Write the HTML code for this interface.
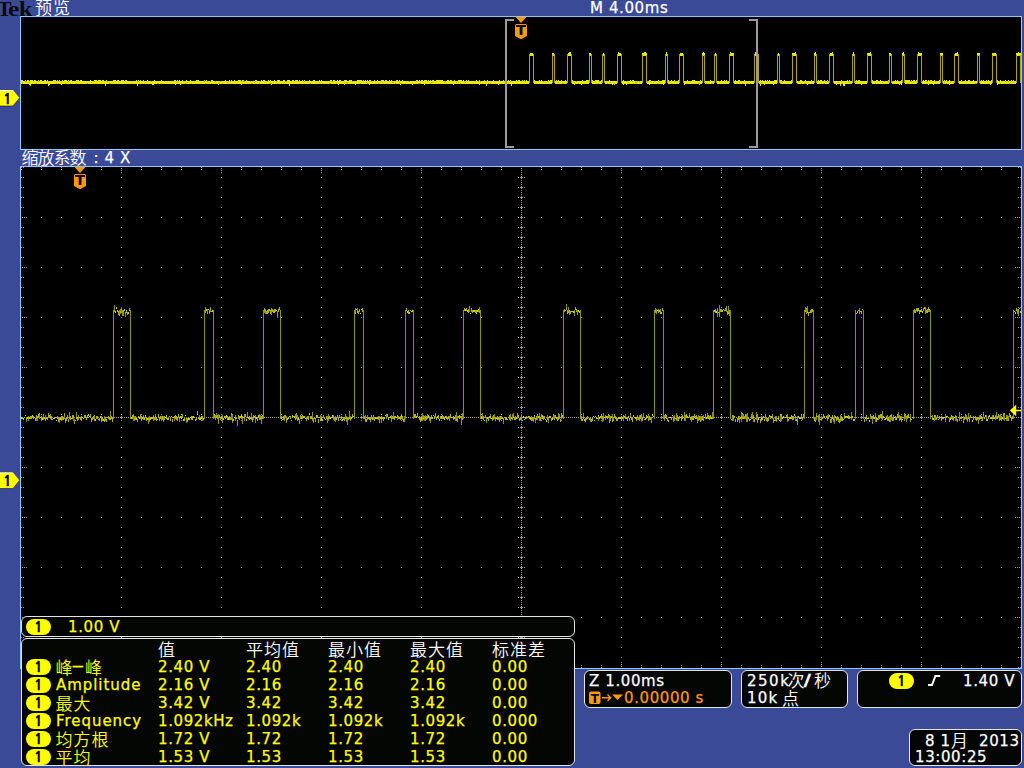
<!DOCTYPE html>
<html lang="zh"><head><meta charset="utf-8"><title>Tek</title><style>
html,body{margin:0;padding:0}
body{width:1024px;height:768px;overflow:hidden;background:#3b4a97;position:relative;font-family:"DejaVu Sans","Liberation Sans","Noto Sans CJK SC",sans-serif;font-size:15px;color:#fff;line-height:18px}
.scr{position:absolute;left:0;top:0}
.abs{position:absolute;white-space:pre;height:18px}
.t{-webkit-text-stroke:.25px currentColor;letter-spacing:.6px}
.cj{font-family:"Liberation Sans","Noto Sans CJK SC",sans-serif;font-weight:350;font-size:17px;letter-spacing:-1px;-webkit-text-stroke:0;position:absolute;white-space:pre;height:18px;line-height:18px}
.sp{letter-spacing:1px}
.tek span{position:absolute;top:0;transform-origin:0 0}
.tek{left:0;width:40px;top:-3px;font-family:"Liberation Serif",serif;font-weight:bold;font-size:21px;color:#0a0a0a;letter-spacing:-.4px;line-height:24px;height:24px}
.box{position:absolute;background:#040604;border:1px solid #e4e4e4;border-radius:6px;box-sizing:border-box}
.pill{position:absolute;width:25px;height:16px;border-radius:8px;background:#ffff00;color:#000;text-align:center;line-height:16px;font-size:14.5px;font-family:'NanumGothic','Liberation Sans',sans-serif;font-weight:bold;-webkit-text-stroke:.4px #000}
.y{color:#ffff00}
.o{color:#ff9900}
</style></head>
<body>
<svg class="scr" width="1024" height="768" viewBox="0 0 1024 768">
<rect x="20.5" y="16.5" width="1001" height="133" fill="#000" stroke="#93c4fb"/>
<rect x="20.5" y="166.5" width="1001" height="502" fill="#000" stroke="#93c4fb"/>
<g stroke="#a39a7d" stroke-width="1" shape-rendering="crispEdges" fill="none"><line x1="121.5" x2="121.5" y1="177" y2="658" stroke-dasharray="1 9"/><line x1="221.5" x2="221.5" y1="177" y2="658" stroke-dasharray="1 9"/><line x1="321.5" x2="321.5" y1="177" y2="658" stroke-dasharray="1 9"/><line x1="421.5" x2="421.5" y1="177" y2="658" stroke-dasharray="1 9"/><line x1="621.5" x2="621.5" y1="177" y2="658" stroke-dasharray="1 9"/><line x1="721.5" x2="721.5" y1="177" y2="658" stroke-dasharray="1 9"/><line x1="821.5" x2="821.5" y1="177" y2="658" stroke-dasharray="1 9"/><line x1="921.5" x2="921.5" y1="177" y2="658" stroke-dasharray="1 9"/><line x1="21" x2="1021" y1="217.5" y2="217.5" stroke-dasharray="1 19"/><path d="M22 217h1v1h-1zM24 217h1v1h-1zM26 217h1v1h-1zM1019 217h1v1h-1zM1017 217h1v1h-1zM1015 217h1v1h-1z" stroke="none" fill="#a39a7d"/><line x1="21" x2="1021" y1="267.5" y2="267.5" stroke-dasharray="1 19"/><path d="M22 267h1v1h-1zM24 267h1v1h-1zM26 267h1v1h-1zM1019 267h1v1h-1zM1017 267h1v1h-1zM1015 267h1v1h-1z" stroke="none" fill="#a39a7d"/><line x1="21" x2="1021" y1="317.5" y2="317.5" stroke-dasharray="1 19"/><path d="M22 317h1v1h-1zM24 317h1v1h-1zM26 317h1v1h-1zM1019 317h1v1h-1zM1017 317h1v1h-1zM1015 317h1v1h-1z" stroke="none" fill="#a39a7d"/><line x1="21" x2="1021" y1="367.5" y2="367.5" stroke-dasharray="1 19"/><path d="M22 367h1v1h-1zM24 367h1v1h-1zM26 367h1v1h-1zM1019 367h1v1h-1zM1017 367h1v1h-1zM1015 367h1v1h-1z" stroke="none" fill="#a39a7d"/><line x1="21" x2="1021" y1="467.5" y2="467.5" stroke-dasharray="1 19"/><path d="M22 467h1v1h-1zM24 467h1v1h-1zM26 467h1v1h-1zM1019 467h1v1h-1zM1017 467h1v1h-1zM1015 467h1v1h-1z" stroke="none" fill="#a39a7d"/><line x1="21" x2="1021" y1="517.5" y2="517.5" stroke-dasharray="1 19"/><path d="M22 517h1v1h-1zM24 517h1v1h-1zM26 517h1v1h-1zM1019 517h1v1h-1zM1017 517h1v1h-1zM1015 517h1v1h-1z" stroke="none" fill="#a39a7d"/><line x1="21" x2="1021" y1="567.5" y2="567.5" stroke-dasharray="1 19"/><path d="M22 567h1v1h-1zM24 567h1v1h-1zM26 567h1v1h-1zM1019 567h1v1h-1zM1017 567h1v1h-1zM1015 567h1v1h-1z" stroke="none" fill="#a39a7d"/><line x1="21" x2="1021" y1="617.5" y2="617.5" stroke-dasharray="1 19"/><path d="M22 617h1v1h-1zM24 617h1v1h-1zM26 617h1v1h-1zM1019 617h1v1h-1zM1017 617h1v1h-1zM1015 617h1v1h-1z" stroke="none" fill="#a39a7d"/><line x1="21.5" x2="21.5" y1="167" y2="668" stroke-dasharray="1 9"/><line x1="23.5" x2="23.5" y1="167" y2="668" stroke-dasharray="1 9"/><line x1="1020.5" x2="1020.5" y1="167" y2="668" stroke-dasharray="1 9"/><line x1="1018.5" x2="1018.5" y1="167" y2="668" stroke-dasharray="1 9"/><path d="M21 217h1v1h-1zM23 217h1v1h-1zM1020 217h1v1h-1zM1018 217h1v1h-1z" stroke="none" fill="#000"/><path d="M21 267h1v1h-1zM23 267h1v1h-1zM1020 267h1v1h-1zM1018 267h1v1h-1z" stroke="none" fill="#000"/><path d="M21 317h1v1h-1zM23 317h1v1h-1zM1020 317h1v1h-1zM1018 317h1v1h-1z" stroke="none" fill="#000"/><path d="M21 367h1v1h-1zM23 367h1v1h-1zM1020 367h1v1h-1zM1018 367h1v1h-1z" stroke="none" fill="#000"/><path d="M21 417h1v1h-1zM23 417h1v1h-1zM1020 417h1v1h-1zM1018 417h1v1h-1z" stroke="none" fill="#000"/><path d="M21 467h1v1h-1zM23 467h1v1h-1zM1020 467h1v1h-1zM1018 467h1v1h-1z" stroke="none" fill="#000"/><path d="M21 517h1v1h-1zM23 517h1v1h-1zM1020 517h1v1h-1zM1018 517h1v1h-1z" stroke="none" fill="#000"/><path d="M21 567h1v1h-1zM23 567h1v1h-1zM1020 567h1v1h-1zM1018 567h1v1h-1z" stroke="none" fill="#000"/><path d="M21 617h1v1h-1zM23 617h1v1h-1zM1020 617h1v1h-1zM1018 617h1v1h-1z" stroke="none" fill="#000"/><line x1="21" x2="1021" y1="167.5" y2="167.5" stroke-dasharray="1 19"/><line x1="21" x2="1021" y1="169.5" y2="169.5" stroke-dasharray="1 19"/><line x1="21" x2="1021" y1="667.5" y2="667.5" stroke-dasharray="1 19"/><line x1="21" x2="1021" y1="665.5" y2="665.5" stroke-dasharray="1 19"/><path d="M121 167h1v1h-1zM121 169h1v1h-1zM121 667h1v1h-1zM121 665h1v1h-1z" stroke="none" fill="#000"/><path d="M121 168h1v1h-1zM121 170h1v1h-1zM121 172h1v1h-1zM121 666h1v1h-1zM121 664h1v1h-1zM121 662h1v1h-1z" stroke="none" fill="#a39a7d"/><path d="M221 167h1v1h-1zM221 169h1v1h-1zM221 667h1v1h-1zM221 665h1v1h-1z" stroke="none" fill="#000"/><path d="M221 168h1v1h-1zM221 170h1v1h-1zM221 172h1v1h-1zM221 666h1v1h-1zM221 664h1v1h-1zM221 662h1v1h-1z" stroke="none" fill="#a39a7d"/><path d="M321 167h1v1h-1zM321 169h1v1h-1zM321 667h1v1h-1zM321 665h1v1h-1z" stroke="none" fill="#000"/><path d="M321 168h1v1h-1zM321 170h1v1h-1zM321 172h1v1h-1zM321 666h1v1h-1zM321 664h1v1h-1zM321 662h1v1h-1z" stroke="none" fill="#a39a7d"/><path d="M421 167h1v1h-1zM421 169h1v1h-1zM421 667h1v1h-1zM421 665h1v1h-1z" stroke="none" fill="#000"/><path d="M421 168h1v1h-1zM421 170h1v1h-1zM421 172h1v1h-1zM421 666h1v1h-1zM421 664h1v1h-1zM421 662h1v1h-1z" stroke="none" fill="#a39a7d"/><path d="M521 167h1v1h-1zM521 169h1v1h-1zM521 667h1v1h-1zM521 665h1v1h-1z" stroke="none" fill="#000"/><path d="M521 168h1v1h-1zM521 170h1v1h-1zM521 172h1v1h-1zM521 666h1v1h-1zM521 664h1v1h-1zM521 662h1v1h-1z" stroke="none" fill="#a39a7d"/><path d="M621 167h1v1h-1zM621 169h1v1h-1zM621 667h1v1h-1zM621 665h1v1h-1z" stroke="none" fill="#000"/><path d="M621 168h1v1h-1zM621 170h1v1h-1zM621 172h1v1h-1zM621 666h1v1h-1zM621 664h1v1h-1zM621 662h1v1h-1z" stroke="none" fill="#a39a7d"/><path d="M721 167h1v1h-1zM721 169h1v1h-1zM721 667h1v1h-1zM721 665h1v1h-1z" stroke="none" fill="#000"/><path d="M721 168h1v1h-1zM721 170h1v1h-1zM721 172h1v1h-1zM721 666h1v1h-1zM721 664h1v1h-1zM721 662h1v1h-1z" stroke="none" fill="#a39a7d"/><path d="M821 167h1v1h-1zM821 169h1v1h-1zM821 667h1v1h-1zM821 665h1v1h-1z" stroke="none" fill="#000"/><path d="M821 168h1v1h-1zM821 170h1v1h-1zM821 172h1v1h-1zM821 666h1v1h-1zM821 664h1v1h-1zM821 662h1v1h-1z" stroke="none" fill="#a39a7d"/><path d="M921 167h1v1h-1zM921 169h1v1h-1zM921 667h1v1h-1zM921 665h1v1h-1z" stroke="none" fill="#000"/><path d="M921 168h1v1h-1zM921 170h1v1h-1zM921 172h1v1h-1zM921 666h1v1h-1zM921 664h1v1h-1zM921 662h1v1h-1z" stroke="none" fill="#a39a7d"/><path d="M521 168h1v1h-1zM521 170h1v1h-1zM521 172h1v1h-1zM521 174h1v1h-1zM520 177h3v1h-3zM521 176h1v3h-1zM518 177h1v1h-1zM524 177h1v1h-1zM521 180h1v1h-1zM521 182h1v1h-1zM521 184h1v1h-1zM520 187h3v1h-3zM521 186h1v3h-1zM518 187h1v1h-1zM524 187h1v1h-1zM521 190h1v1h-1zM521 192h1v1h-1zM521 194h1v1h-1zM520 197h3v1h-3zM521 196h1v3h-1zM518 197h1v1h-1zM524 197h1v1h-1zM521 200h1v1h-1zM521 202h1v1h-1zM521 204h1v1h-1zM520 207h3v1h-3zM521 206h1v3h-1zM518 207h1v1h-1zM524 207h1v1h-1zM521 210h1v1h-1zM521 212h1v1h-1zM521 214h1v1h-1zM520 217h3v1h-3zM521 216h1v3h-1zM518 217h1v1h-1zM524 217h1v1h-1zM521 220h1v1h-1zM521 222h1v1h-1zM521 224h1v1h-1zM520 227h3v1h-3zM521 226h1v3h-1zM518 227h1v1h-1zM524 227h1v1h-1zM521 230h1v1h-1zM521 232h1v1h-1zM521 234h1v1h-1zM520 237h3v1h-3zM521 236h1v3h-1zM518 237h1v1h-1zM524 237h1v1h-1zM521 240h1v1h-1zM521 242h1v1h-1zM521 244h1v1h-1zM520 247h3v1h-3zM521 246h1v3h-1zM518 247h1v1h-1zM524 247h1v1h-1zM521 250h1v1h-1zM521 252h1v1h-1zM521 254h1v1h-1zM520 257h3v1h-3zM521 256h1v3h-1zM518 257h1v1h-1zM524 257h1v1h-1zM521 260h1v1h-1zM521 262h1v1h-1zM521 264h1v1h-1zM520 267h3v1h-3zM521 266h1v3h-1zM518 267h1v1h-1zM524 267h1v1h-1zM521 270h1v1h-1zM521 272h1v1h-1zM521 274h1v1h-1zM520 277h3v1h-3zM521 276h1v3h-1zM518 277h1v1h-1zM524 277h1v1h-1zM521 280h1v1h-1zM521 282h1v1h-1zM521 284h1v1h-1zM520 287h3v1h-3zM521 286h1v3h-1zM518 287h1v1h-1zM524 287h1v1h-1zM521 290h1v1h-1zM521 292h1v1h-1zM521 294h1v1h-1zM520 297h3v1h-3zM521 296h1v3h-1zM518 297h1v1h-1zM524 297h1v1h-1zM521 300h1v1h-1zM521 302h1v1h-1zM521 304h1v1h-1zM520 307h3v1h-3zM521 306h1v3h-1zM518 307h1v1h-1zM524 307h1v1h-1zM521 310h1v1h-1zM521 312h1v1h-1zM521 314h1v1h-1zM520 317h3v1h-3zM521 316h1v3h-1zM518 317h1v1h-1zM524 317h1v1h-1zM521 320h1v1h-1zM521 322h1v1h-1zM521 324h1v1h-1zM520 327h3v1h-3zM521 326h1v3h-1zM518 327h1v1h-1zM524 327h1v1h-1zM521 330h1v1h-1zM521 332h1v1h-1zM521 334h1v1h-1zM520 337h3v1h-3zM521 336h1v3h-1zM518 337h1v1h-1zM524 337h1v1h-1zM521 340h1v1h-1zM521 342h1v1h-1zM521 344h1v1h-1zM520 347h3v1h-3zM521 346h1v3h-1zM518 347h1v1h-1zM524 347h1v1h-1zM521 350h1v1h-1zM521 352h1v1h-1zM521 354h1v1h-1zM520 357h3v1h-3zM521 356h1v3h-1zM518 357h1v1h-1zM524 357h1v1h-1zM521 360h1v1h-1zM521 362h1v1h-1zM521 364h1v1h-1zM520 367h3v1h-3zM521 366h1v3h-1zM518 367h1v1h-1zM524 367h1v1h-1zM521 370h1v1h-1zM521 372h1v1h-1zM521 374h1v1h-1zM520 377h3v1h-3zM521 376h1v3h-1zM518 377h1v1h-1zM524 377h1v1h-1zM521 380h1v1h-1zM521 382h1v1h-1zM521 384h1v1h-1zM520 387h3v1h-3zM521 386h1v3h-1zM518 387h1v1h-1zM524 387h1v1h-1zM521 390h1v1h-1zM521 392h1v1h-1zM521 394h1v1h-1zM520 397h3v1h-3zM521 396h1v3h-1zM518 397h1v1h-1zM524 397h1v1h-1zM521 400h1v1h-1zM521 402h1v1h-1zM521 404h1v1h-1zM520 407h3v1h-3zM521 406h1v3h-1zM518 407h1v1h-1zM524 407h1v1h-1zM521 410h1v1h-1zM521 412h1v1h-1zM521 414h1v1h-1zM520 417h3v1h-3zM521 416h1v3h-1zM518 417h1v1h-1zM524 417h1v1h-1zM521 420h1v1h-1zM521 422h1v1h-1zM521 424h1v1h-1zM520 427h3v1h-3zM521 426h1v3h-1zM518 427h1v1h-1zM524 427h1v1h-1zM521 430h1v1h-1zM521 432h1v1h-1zM521 434h1v1h-1zM520 437h3v1h-3zM521 436h1v3h-1zM518 437h1v1h-1zM524 437h1v1h-1zM521 440h1v1h-1zM521 442h1v1h-1zM521 444h1v1h-1zM520 447h3v1h-3zM521 446h1v3h-1zM518 447h1v1h-1zM524 447h1v1h-1zM521 450h1v1h-1zM521 452h1v1h-1zM521 454h1v1h-1zM520 457h3v1h-3zM521 456h1v3h-1zM518 457h1v1h-1zM524 457h1v1h-1zM521 460h1v1h-1zM521 462h1v1h-1zM521 464h1v1h-1zM520 467h3v1h-3zM521 466h1v3h-1zM518 467h1v1h-1zM524 467h1v1h-1zM521 470h1v1h-1zM521 472h1v1h-1zM521 474h1v1h-1zM520 477h3v1h-3zM521 476h1v3h-1zM518 477h1v1h-1zM524 477h1v1h-1zM521 480h1v1h-1zM521 482h1v1h-1zM521 484h1v1h-1zM520 487h3v1h-3zM521 486h1v3h-1zM518 487h1v1h-1zM524 487h1v1h-1zM521 490h1v1h-1zM521 492h1v1h-1zM521 494h1v1h-1zM520 497h3v1h-3zM521 496h1v3h-1zM518 497h1v1h-1zM524 497h1v1h-1zM521 500h1v1h-1zM521 502h1v1h-1zM521 504h1v1h-1zM520 507h3v1h-3zM521 506h1v3h-1zM518 507h1v1h-1zM524 507h1v1h-1zM521 510h1v1h-1zM521 512h1v1h-1zM521 514h1v1h-1zM520 517h3v1h-3zM521 516h1v3h-1zM518 517h1v1h-1zM524 517h1v1h-1zM521 520h1v1h-1zM521 522h1v1h-1zM521 524h1v1h-1zM520 527h3v1h-3zM521 526h1v3h-1zM518 527h1v1h-1zM524 527h1v1h-1zM521 530h1v1h-1zM521 532h1v1h-1zM521 534h1v1h-1zM520 537h3v1h-3zM521 536h1v3h-1zM518 537h1v1h-1zM524 537h1v1h-1zM521 540h1v1h-1zM521 542h1v1h-1zM521 544h1v1h-1zM520 547h3v1h-3zM521 546h1v3h-1zM518 547h1v1h-1zM524 547h1v1h-1zM521 550h1v1h-1zM521 552h1v1h-1zM521 554h1v1h-1zM520 557h3v1h-3zM521 556h1v3h-1zM518 557h1v1h-1zM524 557h1v1h-1zM521 560h1v1h-1zM521 562h1v1h-1zM521 564h1v1h-1zM520 567h3v1h-3zM521 566h1v3h-1zM518 567h1v1h-1zM524 567h1v1h-1zM521 570h1v1h-1zM521 572h1v1h-1zM521 574h1v1h-1zM520 577h3v1h-3zM521 576h1v3h-1zM518 577h1v1h-1zM524 577h1v1h-1zM521 580h1v1h-1zM521 582h1v1h-1zM521 584h1v1h-1zM520 587h3v1h-3zM521 586h1v3h-1zM518 587h1v1h-1zM524 587h1v1h-1zM521 590h1v1h-1zM521 592h1v1h-1zM521 594h1v1h-1zM520 597h3v1h-3zM521 596h1v3h-1zM518 597h1v1h-1zM524 597h1v1h-1zM521 600h1v1h-1zM521 602h1v1h-1zM521 604h1v1h-1zM520 607h3v1h-3zM521 606h1v3h-1zM518 607h1v1h-1zM524 607h1v1h-1zM521 610h1v1h-1zM521 612h1v1h-1zM521 614h1v1h-1zM520 617h3v1h-3zM521 616h1v3h-1zM518 617h1v1h-1zM524 617h1v1h-1zM521 620h1v1h-1zM521 622h1v1h-1zM521 624h1v1h-1zM520 627h3v1h-3zM521 626h1v3h-1zM518 627h1v1h-1zM524 627h1v1h-1zM521 630h1v1h-1zM521 632h1v1h-1zM521 634h1v1h-1zM520 637h3v1h-3zM521 636h1v3h-1zM518 637h1v1h-1zM524 637h1v1h-1zM521 640h1v1h-1zM521 642h1v1h-1zM521 644h1v1h-1zM520 647h3v1h-3zM521 646h1v3h-1zM518 647h1v1h-1zM524 647h1v1h-1zM521 650h1v1h-1zM521 652h1v1h-1zM521 654h1v1h-1zM520 657h3v1h-3zM521 656h1v3h-1zM518 657h1v1h-1zM524 657h1v1h-1zM521 660h1v1h-1zM521 662h1v1h-1zM521 664h1v1h-1zM521 666h1v1h-1z" stroke="none" fill="#a39a7d"/><path d="M41 416h1v3h-1zM41 414h1v1h-1zM41 420h1v1h-1zM61 416h1v3h-1zM61 414h1v1h-1zM61 420h1v1h-1zM81 416h1v3h-1zM81 414h1v1h-1zM81 420h1v1h-1zM101 416h1v3h-1zM101 414h1v1h-1zM101 420h1v1h-1zM121 416h1v3h-1zM121 414h1v1h-1zM121 420h1v1h-1zM141 416h1v3h-1zM141 414h1v1h-1zM141 420h1v1h-1zM161 416h1v3h-1zM161 414h1v1h-1zM161 420h1v1h-1zM181 416h1v3h-1zM181 414h1v1h-1zM181 420h1v1h-1zM201 416h1v3h-1zM201 414h1v1h-1zM201 420h1v1h-1zM221 416h1v3h-1zM221 414h1v1h-1zM221 420h1v1h-1zM241 416h1v3h-1zM241 414h1v1h-1zM241 420h1v1h-1zM261 416h1v3h-1zM261 414h1v1h-1zM261 420h1v1h-1zM281 416h1v3h-1zM281 414h1v1h-1zM281 420h1v1h-1zM301 416h1v3h-1zM301 414h1v1h-1zM301 420h1v1h-1zM321 416h1v3h-1zM321 414h1v1h-1zM321 420h1v1h-1zM341 416h1v3h-1zM341 414h1v1h-1zM341 420h1v1h-1zM361 416h1v3h-1zM361 414h1v1h-1zM361 420h1v1h-1zM381 416h1v3h-1zM381 414h1v1h-1zM381 420h1v1h-1zM401 416h1v3h-1zM401 414h1v1h-1zM401 420h1v1h-1zM421 416h1v3h-1zM421 414h1v1h-1zM421 420h1v1h-1zM441 416h1v3h-1zM441 414h1v1h-1zM441 420h1v1h-1zM461 416h1v3h-1zM461 414h1v1h-1zM461 420h1v1h-1zM481 416h1v3h-1zM481 414h1v1h-1zM481 420h1v1h-1zM501 416h1v3h-1zM501 414h1v1h-1zM501 420h1v1h-1zM521 416h1v3h-1zM521 414h1v1h-1zM521 420h1v1h-1zM541 416h1v3h-1zM541 414h1v1h-1zM541 420h1v1h-1zM561 416h1v3h-1zM561 414h1v1h-1zM561 420h1v1h-1zM581 416h1v3h-1zM581 414h1v1h-1zM581 420h1v1h-1zM601 416h1v3h-1zM601 414h1v1h-1zM601 420h1v1h-1zM621 416h1v3h-1zM621 414h1v1h-1zM621 420h1v1h-1zM641 416h1v3h-1zM641 414h1v1h-1zM641 420h1v1h-1zM661 416h1v3h-1zM661 414h1v1h-1zM661 420h1v1h-1zM681 416h1v3h-1zM681 414h1v1h-1zM681 420h1v1h-1zM701 416h1v3h-1zM701 414h1v1h-1zM701 420h1v1h-1zM721 416h1v3h-1zM721 414h1v1h-1zM721 420h1v1h-1zM741 416h1v3h-1zM741 414h1v1h-1zM741 420h1v1h-1zM761 416h1v3h-1zM761 414h1v1h-1zM761 420h1v1h-1zM781 416h1v3h-1zM781 414h1v1h-1zM781 420h1v1h-1zM801 416h1v3h-1zM801 414h1v1h-1zM801 420h1v1h-1zM821 416h1v3h-1zM821 414h1v1h-1zM821 420h1v1h-1zM841 416h1v3h-1zM841 414h1v1h-1zM841 420h1v1h-1zM861 416h1v3h-1zM861 414h1v1h-1zM861 420h1v1h-1zM881 416h1v3h-1zM881 414h1v1h-1zM881 420h1v1h-1zM901 416h1v3h-1zM901 414h1v1h-1zM901 420h1v1h-1zM921 416h1v3h-1zM921 414h1v1h-1zM921 420h1v1h-1zM941 416h1v3h-1zM941 414h1v1h-1zM941 420h1v1h-1zM961 416h1v3h-1zM961 414h1v1h-1zM961 420h1v1h-1zM981 416h1v3h-1zM981 414h1v1h-1zM981 420h1v1h-1zM1001 416h1v3h-1zM1001 414h1v1h-1zM1001 420h1v1h-1z" stroke="none" fill="#a39a7d"/><line x1="22" x2="1021" y1="417.5" y2="417.5" stroke-dasharray="1 1"/></g>
<g shape-rendering="crispEdges"><path d="M26 417h1v5h-1zM28 416h1v5h-1zM36 415h1v6h-1zM37 416h1v5h-1zM39 413h1v6h-1zM43 414h1v6h-1zM45 415h1v6h-1zM48 413h1v5h-1zM50 414h1v5h-1zM59 417h1v6h-1zM64 413h1v6h-1zM65 418h1v5h-1zM69 412h1v7h-1zM73 415h1v6h-1zM74 419h1v5h-1zM76 412h1v6h-1zM78 415h1v5h-1zM94 415h1v6h-1zM104 416h1v6h-1zM110 411h1v9h-1zM113 310h1v109h-1zM114 305h1v6h-1zM119 310h1v6h-1zM120 309h1v5h-1zM121 307h1v6h-1zM122 310h1v6h-1zM123 310h1v6h-1zM125 312h1v5h-1zM130 310h1v109h-1zM133 414h1v7h-1zM134 416h1v5h-1zM140 414h1v5h-1zM143 415h1v5h-1zM148 418h1v6h-1zM149 416h1v6h-1zM153 415h1v6h-1zM155 414h1v6h-1zM161 416h1v5h-1zM163 416h1v6h-1zM174 416h1v5h-1zM179 417h1v5h-1zM186 417h1v6h-1zM199 415h1v5h-1zM202 416h1v5h-1zM204 310h1v109h-1zM205 307h1v6h-1zM207 309h1v5h-1zM210 307h1v5h-1zM213 310h1v109h-1zM215 415h1v5h-1zM216 413h1v5h-1zM218 414h1v10h-1zM222 415h1v8h-1zM231 413h1v7h-1zM232 414h1v9h-1zM235 415h1v6h-1zM237 420h1v6h-1zM242 417h1v7h-1zM244 414h1v7h-1zM247 412h1v6h-1zM251 413h1v7h-1zM253 415h1v5h-1zM255 415h1v8h-1zM259 414h1v5h-1zM260 415h1v5h-1zM261 417h1v7h-1zM263 310h1v109h-1zM264 308h1v5h-1zM265 309h1v5h-1zM271 308h1v7h-1zM277 311h1v7h-1zM280 310h1v109h-1zM284 415h1v6h-1zM286 416h1v7h-1zM295 414h1v6h-1zM296 413h1v6h-1zM297 415h1v6h-1zM299 419h1v5h-1zM312 412h1v9h-1zM313 418h1v5h-1zM320 415h1v6h-1zM327 416h1v7h-1zM328 414h1v7h-1zM333 415h1v5h-1zM335 416h1v6h-1zM345 414h1v5h-1zM346 416h1v6h-1zM347 417h1v8h-1zM349 411h1v7h-1zM350 416h1v5h-1zM354 310h1v109h-1zM355 308h1v6h-1zM357 308h1v5h-1zM363 310h1v109h-1zM365 415h1v7h-1zM367 415h1v5h-1zM373 415h1v5h-1zM379 416h1v6h-1zM381 418h1v5h-1zM386 414h1v5h-1zM391 415h1v7h-1zM393 412h1v7h-1zM397 415h1v5h-1zM404 416h1v6h-1zM405 310h1v109h-1zM413 310h1v109h-1zM422 413h1v8h-1zM423 415h1v5h-1zM424 416h1v5h-1zM425 415h1v6h-1zM427 414h1v5h-1zM429 416h1v5h-1zM430 418h1v5h-1zM435 413h1v5h-1zM449 416h1v5h-1zM455 416h1v5h-1zM456 412h1v9h-1zM457 416h1v6h-1zM461 419h1v6h-1zM462 413h1v7h-1zM463 310h1v109h-1zM469 307h1v5h-1zM479 307h1v6h-1zM480 310h1v109h-1zM482 413h1v6h-1zM486 418h1v5h-1zM490 414h1v5h-1zM492 416h1v5h-1zM493 415h1v5h-1zM494 414h1v5h-1zM499 416h1v6h-1zM503 418h1v6h-1zM509 415h1v5h-1zM510 414h1v7h-1zM512 414h1v6h-1zM513 413h1v5h-1zM517 413h1v6h-1zM521 414h1v6h-1zM531 416h1v5h-1zM533 417h1v5h-1zM535 418h1v5h-1zM537 415h1v5h-1zM539 413h1v8h-1zM541 414h1v5h-1zM547 415h1v5h-1zM548 418h1v5h-1zM553 414h1v5h-1zM554 415h1v5h-1zM558 413h1v7h-1zM559 414h1v5h-1zM563 310h1v109h-1zM566 304h1v6h-1zM568 307h1v5h-1zM569 310h1v5h-1zM574 310h1v6h-1zM577 310h1v5h-1zM580 310h1v109h-1zM583 413h1v6h-1zM590 417h1v5h-1zM598 416h1v5h-1zM602 417h1v5h-1zM603 413h1v8h-1zM605 415h1v5h-1zM609 415h1v8h-1zM610 416h1v5h-1zM612 414h1v8h-1zM623 415h1v6h-1zM625 414h1v5h-1zM630 413h1v5h-1zM637 415h1v5h-1zM639 415h1v6h-1zM641 415h1v7h-1zM643 413h1v5h-1zM648 414h1v6h-1zM651 417h1v5h-1zM654 310h1v109h-1zM655 308h1v5h-1zM656 309h1v5h-1zM660 309h1v5h-1zM663 310h1v109h-1zM664 415h1v6h-1zM673 416h1v6h-1zM674 415h1v6h-1zM676 413h1v8h-1zM677 415h1v6h-1zM684 412h1v9h-1zM685 416h1v5h-1zM689 413h1v5h-1zM691 416h1v6h-1zM697 417h1v6h-1zM698 415h1v6h-1zM700 416h1v5h-1zM701 416h1v5h-1zM703 415h1v5h-1zM705 414h1v5h-1zM707 413h1v6h-1zM712 412h1v7h-1zM713 310h1v109h-1zM717 308h1v9h-1zM719 305h1v12h-1zM726 306h1v6h-1zM728 306h1v7h-1zM729 310h1v6h-1zM730 310h1v109h-1zM732 415h1v6h-1zM733 415h1v6h-1zM739 416h1v7h-1zM741 412h1v10h-1zM742 413h1v6h-1zM743 414h1v5h-1zM745 414h1v5h-1zM746 414h1v8h-1zM747 413h1v9h-1zM751 414h1v5h-1zM752 412h1v7h-1zM753 415h1v7h-1zM756 412h1v8h-1zM757 414h1v9h-1zM765 414h1v5h-1zM772 414h1v5h-1zM773 418h1v5h-1zM775 416h1v5h-1zM776 416h1v6h-1zM780 414h1v8h-1zM781 415h1v6h-1zM787 414h1v8h-1zM795 416h1v5h-1zM797 416h1v9h-1zM804 310h1v109h-1zM805 307h1v5h-1zM806 308h1v6h-1zM807 306h1v7h-1zM813 310h1v109h-1zM815 417h1v5h-1zM816 413h1v7h-1zM818 415h1v7h-1zM819 414h1v11h-1zM821 416h1v5h-1zM827 415h1v6h-1zM828 414h1v5h-1zM831 417h1v6h-1zM833 417h1v5h-1zM834 415h1v9h-1zM838 417h1v5h-1zM840 415h1v7h-1zM844 413h1v6h-1zM851 412h1v8h-1zM855 310h1v109h-1zM859 308h1v6h-1zM863 310h1v109h-1zM866 415h1v6h-1zM870 414h1v5h-1zM872 416h1v8h-1zM875 413h1v9h-1zM878 415h1v5h-1zM882 411h1v9h-1zM887 415h1v6h-1zM889 416h1v6h-1zM890 415h1v7h-1zM891 414h1v6h-1zM893 415h1v6h-1zM898 412h1v6h-1zM899 415h1v6h-1zM901 417h1v5h-1zM904 413h1v8h-1zM905 414h1v5h-1zM906 416h1v6h-1zM910 414h1v8h-1zM913 310h1v109h-1zM925 307h1v7h-1zM928 307h1v5h-1zM930 310h1v109h-1zM932 415h1v5h-1zM934 416h1v5h-1zM935 415h1v5h-1zM945 414h1v8h-1zM953 416h1v5h-1zM955 415h1v6h-1zM956 416h1v5h-1zM959 412h1v8h-1zM963 416h1v6h-1zM965 414h1v5h-1zM966 415h1v5h-1zM967 417h1v5h-1zM968 413h1v5h-1zM969 417h1v5h-1zM978 417h1v7h-1zM979 415h1v5h-1zM983 412h1v6h-1zM986 415h1v6h-1zM992 415h1v6h-1zM995 415h1v5h-1zM996 412h1v7h-1zM999 415h1v6h-1zM1000 414h1v6h-1zM1003 413h1v7h-1zM1004 413h1v8h-1zM1006 415h1v6h-1zM1007 415h1v6h-1zM1008 416h1v5h-1zM1013 310h1v109h-1zM1017 309h1v5h-1zM1018 309h1v7h-1z" fill="#8f8d00"/><path d="M26 418h1v2h-1zM28 416h1v2h-1zM30 416h1v3h-1zM31 416h1v3h-1zM33 416h1v3h-1zM35 418h1v3h-1zM36 416h1v2h-1zM37 416h1v2h-1zM38 414h1v4h-1zM39 413h1v2h-1zM41 418h1v3h-1zM43 418h1v2h-1zM45 418h1v2h-1zM47 417h1v3h-1zM48 415h1v2h-1zM49 415h1v3h-1zM50 416h1v2h-1zM51 416h1v4h-1zM57 416h1v3h-1zM58 418h1v4h-1zM59 418h1v2h-1zM61 416h1v4h-1zM62 416h1v4h-1zM63 417h1v3h-1zM64 414h1v2h-1zM65 419h1v2h-1zM66 418h1v3h-1zM67 415h1v4h-1zM68 419h1v3h-1zM69 417h1v2h-1zM70 416h1v4h-1zM72 415h1v4h-1zM73 416h1v2h-1zM74 422h1v2h-1zM76 417h1v2h-1zM77 417h1v4h-1zM78 417h1v2h-1zM80 417h1v3h-1zM81 417h1v3h-1zM84 415h1v3h-1zM85 415h1v3h-1zM86 417h1v3h-1zM87 415h1v3h-1zM90 414h1v4h-1zM91 418h1v4h-1zM92 417h1v3h-1zM93 416h1v3h-1zM94 419h1v2h-1zM96 416h1v3h-1zM97 416h1v3h-1zM99 418h1v3h-1zM101 418h1v4h-1zM102 418h1v3h-1zM104 420h1v2h-1zM105 417h1v4h-1zM106 419h1v3h-1zM108 416h1v3h-1zM109 417h1v3h-1zM110 418h1v2h-1zM111 416h1v3h-1zM112 418h1v4h-1zM114 310h1v2h-1zM118 311h1v4h-1zM119 314h1v2h-1zM120 311h1v2h-1zM121 308h1v2h-1zM122 311h1v2h-1zM123 310h1v2h-1zM125 312h1v2h-1zM126 310h1v3h-1zM127 312h1v3h-1zM129 308h1v3h-1zM132 415h1v4h-1zM133 415h1v2h-1zM134 418h1v2h-1zM135 416h1v4h-1zM137 419h1v3h-1zM140 416h1v2h-1zM141 417h1v4h-1zM143 416h1v2h-1zM145 415h1v3h-1zM146 418h1v3h-1zM148 418h1v2h-1zM149 418h1v2h-1zM153 416h1v2h-1zM154 417h1v3h-1zM155 416h1v2h-1zM156 418h1v3h-1zM158 414h1v4h-1zM159 417h1v4h-1zM160 416h1v3h-1zM161 417h1v2h-1zM162 416h1v4h-1zM163 419h1v2h-1zM164 416h1v4h-1zM166 415h1v4h-1zM168 417h1v3h-1zM170 417h1v4h-1zM172 419h1v3h-1zM174 416h1v2h-1zM175 415h1v4h-1zM176 416h1v4h-1zM177 417h1v4h-1zM178 414h1v4h-1zM179 417h1v2h-1zM182 414h1v4h-1zM184 418h1v3h-1zM186 418h1v2h-1zM187 418h1v4h-1zM191 416h1v4h-1zM192 416h1v4h-1zM196 417h1v3h-1zM197 411h1v4h-1zM199 418h1v2h-1zM202 416h1v2h-1zM205 311h1v2h-1zM207 312h1v2h-1zM209 310h1v4h-1zM210 308h1v2h-1zM214 414h1v4h-1zM215 417h1v2h-1zM216 416h1v2h-1zM217 415h1v4h-1zM218 419h1v2h-1zM219 415h1v3h-1zM220 417h1v3h-1zM222 417h1v2h-1zM225 416h1v3h-1zM227 416h1v4h-1zM229 416h1v4h-1zM230 417h1v3h-1zM231 413h1v2h-1zM232 419h1v2h-1zM235 417h1v2h-1zM237 420h1v2h-1zM238 415h1v4h-1zM239 416h1v4h-1zM242 416h1v2h-1zM244 417h1v2h-1zM245 414h1v3h-1zM247 416h1v2h-1zM249 416h1v4h-1zM251 417h1v2h-1zM252 418h1v4h-1zM253 416h1v2h-1zM255 417h1v2h-1zM257 417h1v4h-1zM259 418h1v2h-1zM260 417h1v2h-1zM261 417h1v2h-1zM262 415h1v4h-1zM264 309h1v2h-1zM265 310h1v2h-1zM266 311h1v3h-1zM267 310h1v4h-1zM268 309h1v4h-1zM270 310h1v4h-1zM271 309h1v2h-1zM272 309h1v3h-1zM273 310h1v3h-1zM274 309h1v4h-1zM275 309h1v3h-1zM277 313h1v2h-1zM278 309h1v3h-1zM279 307h1v3h-1zM283 416h1v4h-1zM284 417h1v2h-1zM285 415h1v3h-1zM286 419h1v2h-1zM290 416h1v3h-1zM292 415h1v3h-1zM295 418h1v2h-1zM296 416h1v2h-1zM297 418h1v2h-1zM299 421h1v2h-1zM300 415h1v4h-1zM302 415h1v4h-1zM306 418h1v3h-1zM307 416h1v3h-1zM308 416h1v4h-1zM310 416h1v3h-1zM311 416h1v3h-1zM312 418h1v2h-1zM313 420h1v2h-1zM315 418h1v4h-1zM317 415h1v3h-1zM318 419h1v4h-1zM320 419h1v2h-1zM323 415h1v3h-1zM326 416h1v3h-1zM327 418h1v2h-1zM328 417h1v2h-1zM329 416h1v3h-1zM333 416h1v2h-1zM334 418h1v3h-1zM335 417h1v2h-1zM337 415h1v3h-1zM338 417h1v4h-1zM339 415h1v3h-1zM343 417h1v3h-1zM344 417h1v4h-1zM345 417h1v2h-1zM346 417h1v2h-1zM347 418h1v2h-1zM348 417h1v3h-1zM349 417h1v2h-1zM350 418h1v2h-1zM352 414h1v3h-1zM355 312h1v2h-1zM357 311h1v2h-1zM358 311h1v3h-1zM359 309h1v3h-1zM362 308h1v4h-1zM364 416h1v3h-1zM365 419h1v2h-1zM366 419h1v3h-1zM367 417h1v2h-1zM369 417h1v3h-1zM370 418h1v4h-1zM371 415h1v4h-1zM373 415h1v2h-1zM374 418h1v3h-1zM378 416h1v4h-1zM379 421h1v2h-1zM381 417h1v2h-1zM383 417h1v4h-1zM386 416h1v2h-1zM387 414h1v3h-1zM391 417h1v2h-1zM392 416h1v3h-1zM393 417h1v2h-1zM394 416h1v4h-1zM397 415h1v2h-1zM398 416h1v3h-1zM400 416h1v4h-1zM402 416h1v4h-1zM403 419h1v3h-1zM404 418h1v2h-1zM406 308h1v3h-1zM408 310h1v4h-1zM414 414h1v4h-1zM415 414h1v4h-1zM417 413h1v4h-1zM419 416h1v4h-1zM420 418h1v4h-1zM422 417h1v2h-1zM423 417h1v2h-1zM424 416h1v2h-1zM425 417h1v2h-1zM426 416h1v4h-1zM427 416h1v2h-1zM429 417h1v2h-1zM430 418h1v2h-1zM431 415h1v4h-1zM434 416h1v3h-1zM435 414h1v2h-1zM436 417h1v3h-1zM438 415h1v4h-1zM440 416h1v3h-1zM442 415h1v4h-1zM443 416h1v3h-1zM446 416h1v3h-1zM447 417h1v3h-1zM448 416h1v3h-1zM449 418h1v2h-1zM450 414h1v4h-1zM453 416h1v4h-1zM455 415h1v2h-1zM456 419h1v2h-1zM457 419h1v2h-1zM459 415h1v4h-1zM461 421h1v2h-1zM462 418h1v2h-1zM464 308h1v3h-1zM466 308h1v3h-1zM468 309h1v4h-1zM469 306h1v2h-1zM471 308h1v4h-1zM472 310h1v3h-1zM475 310h1v3h-1zM476 310h1v4h-1zM478 309h1v3h-1zM479 311h1v2h-1zM482 417h1v2h-1zM483 416h1v4h-1zM485 415h1v3h-1zM486 419h1v2h-1zM488 418h1v3h-1zM490 416h1v2h-1zM492 418h1v2h-1zM493 417h1v2h-1zM494 417h1v2h-1zM495 417h1v4h-1zM497 416h1v4h-1zM498 417h1v3h-1zM499 419h1v2h-1zM500 416h1v4h-1zM503 418h1v2h-1zM505 417h1v3h-1zM509 416h1v2h-1zM510 419h1v2h-1zM512 418h1v2h-1zM513 416h1v2h-1zM514 417h1v3h-1zM515 416h1v4h-1zM517 415h1v2h-1zM518 415h1v3h-1zM519 418h1v3h-1zM520 417h1v3h-1zM521 417h1v2h-1zM526 416h1v3h-1zM529 416h1v3h-1zM531 417h1v2h-1zM532 417h1v4h-1zM533 419h1v2h-1zM534 415h1v4h-1zM535 418h1v2h-1zM536 416h1v4h-1zM537 414h1v2h-1zM539 416h1v2h-1zM540 417h1v4h-1zM541 415h1v2h-1zM542 415h1v4h-1zM543 416h1v4h-1zM544 416h1v3h-1zM547 418h1v2h-1zM548 417h1v2h-1zM551 418h1v3h-1zM553 414h1v2h-1zM554 418h1v2h-1zM555 415h1v3h-1zM557 417h1v4h-1zM558 417h1v2h-1zM559 416h1v2h-1zM560 419h1v3h-1zM561 413h1v4h-1zM562 415h1v3h-1zM564 309h1v3h-1zM566 308h1v2h-1zM567 310h1v4h-1zM568 311h1v2h-1zM569 310h1v2h-1zM570 311h1v3h-1zM574 311h1v2h-1zM575 307h1v3h-1zM576 309h1v3h-1zM577 312h1v2h-1zM581 416h1v4h-1zM583 417h1v2h-1zM585 418h1v4h-1zM586 417h1v3h-1zM587 416h1v3h-1zM590 418h1v2h-1zM591 419h1v3h-1zM592 418h1v3h-1zM598 415h1v2h-1zM601 415h1v3h-1zM602 416h1v2h-1zM603 417h1v2h-1zM605 416h1v2h-1zM607 416h1v3h-1zM608 414h1v4h-1zM609 420h1v2h-1zM610 417h1v2h-1zM612 420h1v2h-1zM613 417h1v4h-1zM614 414h1v4h-1zM615 416h1v3h-1zM616 418h1v3h-1zM617 418h1v3h-1zM621 416h1v4h-1zM623 415h1v2h-1zM625 417h1v2h-1zM627 417h1v4h-1zM629 418h1v3h-1zM630 416h1v2h-1zM631 417h1v3h-1zM632 418h1v4h-1zM636 417h1v4h-1zM637 416h1v2h-1zM638 417h1v3h-1zM639 417h1v2h-1zM640 415h1v4h-1zM641 415h1v2h-1zM642 417h1v4h-1zM643 416h1v2h-1zM646 415h1v4h-1zM648 419h1v2h-1zM649 416h1v4h-1zM650 417h1v3h-1zM651 421h1v2h-1zM655 310h1v2h-1zM656 311h1v2h-1zM658 309h1v4h-1zM660 312h1v2h-1zM662 308h1v3h-1zM664 417h1v2h-1zM665 414h1v4h-1zM666 415h1v4h-1zM667 418h1v3h-1zM671 417h1v3h-1zM673 419h1v2h-1zM674 417h1v2h-1zM676 418h1v2h-1zM677 416h1v2h-1zM678 418h1v3h-1zM679 416h1v3h-1zM681 417h1v4h-1zM682 415h1v4h-1zM684 418h1v2h-1zM685 415h1v2h-1zM686 414h1v4h-1zM689 415h1v2h-1zM690 417h1v3h-1zM691 417h1v2h-1zM692 416h1v4h-1zM693 416h1v4h-1zM694 414h1v3h-1zM695 416h1v3h-1zM696 415h1v4h-1zM697 417h1v2h-1zM698 419h1v2h-1zM699 416h1v4h-1zM700 420h1v2h-1zM701 418h1v2h-1zM702 416h1v4h-1zM703 419h1v2h-1zM705 414h1v2h-1zM707 416h1v2h-1zM708 415h1v4h-1zM709 416h1v4h-1zM710 415h1v4h-1zM712 417h1v2h-1zM715 309h1v4h-1zM717 309h1v2h-1zM719 314h1v2h-1zM720 309h1v3h-1zM721 309h1v3h-1zM725 308h1v3h-1zM726 308h1v2h-1zM727 311h1v4h-1zM728 312h1v2h-1zM729 312h1v2h-1zM732 415h1v2h-1zM733 417h1v2h-1zM735 419h1v3h-1zM737 418h1v4h-1zM738 416h1v4h-1zM739 419h1v2h-1zM741 416h1v2h-1zM742 417h1v2h-1zM743 417h1v2h-1zM744 416h1v3h-1zM745 415h1v2h-1zM746 418h1v2h-1zM747 417h1v2h-1zM751 416h1v2h-1zM752 417h1v2h-1zM753 416h1v2h-1zM754 419h1v3h-1zM756 415h1v2h-1zM757 420h1v2h-1zM760 419h1v4h-1zM762 417h1v3h-1zM765 416h1v2h-1zM766 417h1v4h-1zM767 418h1v4h-1zM768 417h1v4h-1zM770 416h1v3h-1zM772 416h1v2h-1zM773 419h1v2h-1zM775 417h1v2h-1zM776 419h1v2h-1zM778 416h1v4h-1zM780 414h1v2h-1zM781 415h1v2h-1zM786 415h1v3h-1zM787 417h1v2h-1zM791 415h1v4h-1zM792 416h1v4h-1zM793 416h1v4h-1zM795 416h1v2h-1zM797 420h1v2h-1zM801 414h1v4h-1zM802 417h1v3h-1zM803 414h1v4h-1zM805 310h1v2h-1zM806 308h1v2h-1zM807 311h1v2h-1zM808 312h1v4h-1zM810 310h1v3h-1zM811 309h1v4h-1zM812 309h1v3h-1zM814 417h1v4h-1zM815 420h1v2h-1zM816 415h1v2h-1zM818 416h1v2h-1zM819 418h1v2h-1zM821 418h1v2h-1zM823 414h1v4h-1zM827 418h1v2h-1zM828 417h1v2h-1zM830 419h1v4h-1zM831 418h1v2h-1zM832 415h1v4h-1zM833 418h1v2h-1zM834 419h1v2h-1zM836 418h1v3h-1zM837 416h1v4h-1zM838 417h1v2h-1zM839 419h1v4h-1zM840 418h1v2h-1zM841 417h1v3h-1zM842 418h1v3h-1zM844 416h1v2h-1zM848 415h1v4h-1zM849 416h1v3h-1zM851 416h1v2h-1zM859 312h1v2h-1zM861 311h1v3h-1zM864 419h1v3h-1zM866 416h1v2h-1zM870 414h1v2h-1zM871 416h1v3h-1zM872 416h1v2h-1zM873 415h1v4h-1zM875 416h1v2h-1zM876 418h1v4h-1zM878 416h1v2h-1zM879 415h1v4h-1zM880 414h1v4h-1zM881 415h1v4h-1zM882 417h1v2h-1zM886 416h1v3h-1zM887 418h1v2h-1zM888 417h1v4h-1zM889 420h1v2h-1zM890 415h1v2h-1zM891 415h1v2h-1zM892 418h1v3h-1zM893 417h1v2h-1zM895 416h1v4h-1zM897 414h1v4h-1zM898 416h1v2h-1zM899 418h1v2h-1zM900 416h1v4h-1zM901 419h1v2h-1zM904 415h1v2h-1zM905 414h1v2h-1zM906 416h1v2h-1zM907 415h1v4h-1zM908 414h1v4h-1zM910 418h1v2h-1zM914 309h1v4h-1zM915 310h1v3h-1zM916 308h1v3h-1zM917 308h1v4h-1zM918 308h1v3h-1zM919 310h1v4h-1zM921 309h1v3h-1zM923 308h1v3h-1zM925 308h1v2h-1zM926 310h1v3h-1zM927 309h1v4h-1zM928 308h1v2h-1zM929 309h1v3h-1zM932 418h1v2h-1zM934 415h1v2h-1zM935 415h1v2h-1zM936 417h1v3h-1zM937 415h1v3h-1zM939 416h1v3h-1zM945 418h1v2h-1zM949 418h1v4h-1zM951 415h1v4h-1zM952 416h1v4h-1zM953 418h1v2h-1zM955 416h1v2h-1zM956 416h1v2h-1zM957 419h1v3h-1zM959 419h1v2h-1zM961 416h1v3h-1zM963 421h1v2h-1zM964 417h1v3h-1zM965 414h1v2h-1zM966 417h1v2h-1zM967 419h1v2h-1zM968 417h1v2h-1zM969 418h1v2h-1zM970 415h1v3h-1zM973 416h1v4h-1zM975 416h1v4h-1zM976 418h1v3h-1zM977 417h1v3h-1zM978 417h1v2h-1zM979 418h1v2h-1zM980 415h1v4h-1zM982 418h1v3h-1zM983 414h1v2h-1zM986 419h1v2h-1zM988 416h1v3h-1zM992 417h1v2h-1zM993 415h1v4h-1zM995 416h1v2h-1zM996 417h1v2h-1zM997 416h1v3h-1zM998 414h1v4h-1zM999 419h1v2h-1zM1000 418h1v2h-1zM1001 417h1v3h-1zM1003 414h1v2h-1zM1004 413h1v2h-1zM1006 417h1v2h-1zM1007 417h1v2h-1zM1008 419h1v2h-1zM1009 413h1v4h-1zM1011 417h1v4h-1zM1012 416h1v3h-1zM1016 308h1v3h-1zM1017 311h1v2h-1zM1018 310h1v2h-1z" fill="#b3b100"/><path d="M21 417h1v2h-1zM22 417h1v2h-1zM23 418h1v2h-1zM24 417h1v1h-1zM25 415h1v1h-1zM27 417h1v2h-1zM29 417h1v2h-1zM32 415h1v2h-1zM34 417h1v1h-1zM40 417h1v1h-1zM42 418h1v2h-1zM44 417h1v2h-1zM46 418h1v1h-1zM52 419h1v1h-1zM53 418h1v1h-1zM54 418h1v1h-1zM55 417h1v1h-1zM56 420h1v1h-1zM60 418h1v2h-1zM71 418h1v1h-1zM75 420h1v1h-1zM79 417h1v1h-1zM82 417h1v1h-1zM83 418h1v1h-1zM88 414h1v2h-1zM89 416h1v1h-1zM95 419h1v2h-1zM98 419h1v1h-1zM100 416h1v2h-1zM103 419h1v2h-1zM107 417h1v1h-1zM115 311h1v2h-1zM116 307h1v2h-1zM117 310h1v2h-1zM124 309h1v2h-1zM128 312h1v2h-1zM131 417h1v2h-1zM136 418h1v2h-1zM138 416h1v2h-1zM139 417h1v2h-1zM142 417h1v2h-1zM144 418h1v2h-1zM147 418h1v2h-1zM150 418h1v2h-1zM151 417h1v2h-1zM152 417h1v2h-1zM157 419h1v1h-1zM165 417h1v1h-1zM167 418h1v2h-1zM169 416h1v1h-1zM171 416h1v1h-1zM173 417h1v1h-1zM180 416h1v2h-1zM181 418h1v1h-1zM183 419h1v2h-1zM185 415h1v1h-1zM188 418h1v2h-1zM189 418h1v2h-1zM190 417h1v1h-1zM193 416h1v2h-1zM194 417h1v1h-1zM195 419h1v2h-1zM198 418h1v1h-1zM200 418h1v2h-1zM201 417h1v2h-1zM203 418h1v2h-1zM206 309h1v2h-1zM208 309h1v1h-1zM211 311h1v1h-1zM212 310h1v2h-1zM221 416h1v2h-1zM223 418h1v2h-1zM224 416h1v2h-1zM226 415h1v2h-1zM228 418h1v2h-1zM233 419h1v2h-1zM234 417h1v1h-1zM236 418h1v1h-1zM240 416h1v2h-1zM241 415h1v2h-1zM243 417h1v1h-1zM246 419h1v2h-1zM248 417h1v2h-1zM250 418h1v1h-1zM254 416h1v1h-1zM256 417h1v2h-1zM258 415h1v2h-1zM269 309h1v2h-1zM276 310h1v1h-1zM281 417h1v2h-1zM282 419h1v1h-1zM287 418h1v2h-1zM288 417h1v2h-1zM289 416h1v1h-1zM291 420h1v1h-1zM293 416h1v1h-1zM294 416h1v2h-1zM298 418h1v2h-1zM301 418h1v1h-1zM303 416h1v2h-1zM304 416h1v2h-1zM305 418h1v1h-1zM309 413h1v2h-1zM314 418h1v1h-1zM316 415h1v2h-1zM319 417h1v1h-1zM321 418h1v2h-1zM322 419h1v2h-1zM324 418h1v1h-1zM325 419h1v1h-1zM330 417h1v2h-1zM331 417h1v1h-1zM332 415h1v2h-1zM336 418h1v2h-1zM340 419h1v1h-1zM341 417h1v2h-1zM342 419h1v2h-1zM351 417h1v2h-1zM353 416h1v1h-1zM356 309h1v1h-1zM360 313h1v1h-1zM361 309h1v1h-1zM368 418h1v1h-1zM372 418h1v2h-1zM375 417h1v2h-1zM376 418h1v1h-1zM377 417h1v2h-1zM380 417h1v2h-1zM382 418h1v1h-1zM384 417h1v2h-1zM385 415h1v1h-1zM388 418h1v2h-1zM389 417h1v1h-1zM390 416h1v2h-1zM395 416h1v2h-1zM396 417h1v1h-1zM399 417h1v2h-1zM401 415h1v2h-1zM407 311h1v2h-1zM409 312h1v2h-1zM410 310h1v1h-1zM411 311h1v1h-1zM412 310h1v2h-1zM416 416h1v2h-1zM418 417h1v1h-1zM421 418h1v2h-1zM428 415h1v2h-1zM432 417h1v2h-1zM433 415h1v1h-1zM437 416h1v2h-1zM439 419h1v2h-1zM441 416h1v2h-1zM444 418h1v2h-1zM445 416h1v2h-1zM451 417h1v1h-1zM452 417h1v1h-1zM454 417h1v2h-1zM458 416h1v1h-1zM460 416h1v1h-1zM465 309h1v2h-1zM467 310h1v2h-1zM470 313h1v1h-1zM473 310h1v2h-1zM474 310h1v2h-1zM477 310h1v2h-1zM481 417h1v2h-1zM484 420h1v1h-1zM487 417h1v2h-1zM489 416h1v2h-1zM491 418h1v1h-1zM496 418h1v1h-1zM501 418h1v1h-1zM502 418h1v1h-1zM504 417h1v1h-1zM506 418h1v2h-1zM507 419h1v1h-1zM508 417h1v1h-1zM511 417h1v2h-1zM516 418h1v1h-1zM522 420h1v1h-1zM523 416h1v2h-1zM524 419h1v1h-1zM525 417h1v2h-1zM527 417h1v1h-1zM528 416h1v1h-1zM530 418h1v2h-1zM538 416h1v2h-1zM545 419h1v1h-1zM546 420h1v2h-1zM549 416h1v2h-1zM550 416h1v2h-1zM552 418h1v2h-1zM556 417h1v2h-1zM565 310h1v1h-1zM571 311h1v1h-1zM572 311h1v1h-1zM573 311h1v2h-1zM578 310h1v2h-1zM579 311h1v2h-1zM582 419h1v2h-1zM584 419h1v2h-1zM588 417h1v1h-1zM589 418h1v2h-1zM593 416h1v1h-1zM594 420h1v1h-1zM595 416h1v1h-1zM596 417h1v2h-1zM597 418h1v1h-1zM599 417h1v2h-1zM600 416h1v2h-1zM604 417h1v1h-1zM606 416h1v2h-1zM611 416h1v2h-1zM618 417h1v2h-1zM619 417h1v2h-1zM620 417h1v2h-1zM622 417h1v2h-1zM624 416h1v1h-1zM626 418h1v1h-1zM628 416h1v2h-1zM633 415h1v2h-1zM634 417h1v1h-1zM635 417h1v2h-1zM644 419h1v1h-1zM645 418h1v2h-1zM647 416h1v2h-1zM652 414h1v2h-1zM653 416h1v1h-1zM657 310h1v1h-1zM659 310h1v2h-1zM661 312h1v2h-1zM668 420h1v2h-1zM669 417h1v1h-1zM670 417h1v1h-1zM672 415h1v1h-1zM675 418h1v1h-1zM680 417h1v1h-1zM683 417h1v1h-1zM687 416h1v2h-1zM688 417h1v1h-1zM704 417h1v1h-1zM706 417h1v2h-1zM711 417h1v2h-1zM714 310h1v2h-1zM716 311h1v2h-1zM718 312h1v1h-1zM722 310h1v2h-1zM723 309h1v1h-1zM724 310h1v1h-1zM731 419h1v1h-1zM734 416h1v1h-1zM736 417h1v1h-1zM740 417h1v2h-1zM748 418h1v1h-1zM749 419h1v2h-1zM750 419h1v1h-1zM755 418h1v1h-1zM758 418h1v2h-1zM759 417h1v1h-1zM761 418h1v2h-1zM763 416h1v2h-1zM764 419h1v2h-1zM769 415h1v2h-1zM771 416h1v2h-1zM774 420h1v1h-1zM777 418h1v1h-1zM779 420h1v1h-1zM782 417h1v2h-1zM783 416h1v2h-1zM784 417h1v1h-1zM785 417h1v1h-1zM788 419h1v2h-1zM789 417h1v2h-1zM790 417h1v2h-1zM794 414h1v2h-1zM796 419h1v2h-1zM798 416h1v1h-1zM799 417h1v2h-1zM800 418h1v1h-1zM809 312h1v1h-1zM817 416h1v1h-1zM820 419h1v1h-1zM822 418h1v1h-1zM824 416h1v2h-1zM825 418h1v1h-1zM826 416h1v2h-1zM829 415h1v2h-1zM835 416h1v2h-1zM843 419h1v1h-1zM845 416h1v2h-1zM846 416h1v2h-1zM847 416h1v2h-1zM850 417h1v1h-1zM852 416h1v2h-1zM853 419h1v2h-1zM854 419h1v2h-1zM856 313h1v1h-1zM857 311h1v2h-1zM858 310h1v1h-1zM860 311h1v1h-1zM862 309h1v1h-1zM865 417h1v2h-1zM867 418h1v1h-1zM868 418h1v1h-1zM869 420h1v2h-1zM874 417h1v2h-1zM877 418h1v2h-1zM883 416h1v2h-1zM884 419h1v1h-1zM885 418h1v2h-1zM894 417h1v1h-1zM896 418h1v2h-1zM902 419h1v1h-1zM903 417h1v1h-1zM909 417h1v1h-1zM911 419h1v1h-1zM912 417h1v1h-1zM920 310h1v2h-1zM922 311h1v2h-1zM924 307h1v2h-1zM931 416h1v1h-1zM933 418h1v2h-1zM938 419h1v1h-1zM940 417h1v1h-1zM941 419h1v1h-1zM942 417h1v2h-1zM943 417h1v2h-1zM944 417h1v1h-1zM946 416h1v2h-1zM947 416h1v1h-1zM948 417h1v1h-1zM950 418h1v2h-1zM954 417h1v1h-1zM958 417h1v1h-1zM960 418h1v1h-1zM962 417h1v1h-1zM971 417h1v1h-1zM972 420h1v2h-1zM974 417h1v1h-1zM981 417h1v2h-1zM984 417h1v2h-1zM985 415h1v2h-1zM987 419h1v2h-1zM989 415h1v2h-1zM990 418h1v1h-1zM991 417h1v2h-1zM994 418h1v1h-1zM1002 417h1v2h-1zM1005 418h1v1h-1zM1010 415h1v2h-1zM1014 311h1v1h-1zM1015 312h1v2h-1zM1019 308h1v1h-1zM1020 311h1v2h-1z" fill="#d2d100"/></g>
<g shape-rendering="crispEdges"><path d="M529 54h1v29h-1zM533 54h1v29h-1zM552 54h1v29h-1zM554 54h1v29h-1zM567 54h1v29h-1zM571 54h1v29h-1zM589 54h1v29h-1zM591 54h1v29h-1zM602 54h1v29h-1zM604 54h1v29h-1zM617 54h1v29h-1zM621 54h1v29h-1zM642 54h1v29h-1zM646 54h1v29h-1zM665 54h1v29h-1zM667 54h1v29h-1zM679 54h1v29h-1zM683 54h1v29h-1zM702 54h1v29h-1zM704 54h1v29h-1zM714 54h1v29h-1zM716 54h1v29h-1zM729 54h1v29h-1zM733 54h1v29h-1zM754 54h1v29h-1zM758 54h1v29h-1zM777 54h1v29h-1zM779 54h1v29h-1zM792 54h1v29h-1zM796 54h1v29h-1zM814 54h1v29h-1zM816 54h1v29h-1zM829 54h1v29h-1zM833 54h1v29h-1zM852 54h1v29h-1zM854 54h1v29h-1zM867 54h1v29h-1zM871 54h1v29h-1zM889 54h1v29h-1zM891 54h1v29h-1zM902 54h1v29h-1zM904 54h1v29h-1zM917 54h1v29h-1zM921 54h1v29h-1zM940 54h1v29h-1zM942 54h1v29h-1zM954 54h1v29h-1zM958 54h1v29h-1zM977 54h1v29h-1zM979 54h1v29h-1zM992 54h1v29h-1zM996 54h1v29h-1zM1016 54h1v29h-1zM1020 54h1v29h-1z" fill="#aaa500"/><path d="M21 80h1v4h-1zM22 80h1v4h-1zM23 81h1v3h-1zM24 81h1v3h-1zM25 80h1v4h-1zM26 81h1v3h-1zM27 80h1v4h-1zM28 80h1v4h-1zM29 81h1v4h-1zM30 80h1v6h-1zM31 80h1v4h-1zM32 80h1v4h-1zM33 81h1v3h-1zM34 80h1v4h-1zM35 80h1v4h-1zM36 81h1v3h-1zM37 81h1v3h-1zM38 80h1v4h-1zM39 81h1v3h-1zM40 80h1v4h-1zM41 80h1v4h-1zM42 81h1v3h-1zM43 81h1v3h-1zM44 80h1v4h-1zM45 80h1v4h-1zM46 81h1v3h-1zM47 80h1v4h-1zM48 81h1v5h-1zM49 81h1v4h-1zM50 81h1v3h-1zM51 81h1v3h-1zM52 81h1v3h-1zM53 80h1v4h-1zM54 80h1v4h-1zM55 80h1v4h-1zM56 81h1v3h-1zM57 80h1v4h-1zM58 81h1v3h-1zM59 80h1v4h-1zM60 81h1v3h-1zM61 81h1v4h-1zM62 80h1v4h-1zM63 81h1v3h-1zM64 80h1v4h-1zM65 80h1v4h-1zM66 80h1v4h-1zM67 81h1v3h-1zM68 80h1v4h-1zM69 81h1v3h-1zM70 80h1v4h-1zM71 80h1v4h-1zM72 81h1v3h-1zM73 81h1v3h-1zM74 81h1v3h-1zM75 81h1v3h-1zM76 80h1v4h-1zM77 80h1v4h-1zM78 80h1v4h-1zM79 81h1v3h-1zM80 80h1v4h-1zM81 80h1v4h-1zM82 81h1v3h-1zM83 81h1v3h-1zM84 81h1v3h-1zM85 81h1v3h-1zM86 81h1v3h-1zM87 81h1v3h-1zM88 81h1v3h-1zM89 81h1v3h-1zM90 80h1v4h-1zM91 81h1v3h-1zM92 81h1v3h-1zM93 81h1v3h-1zM94 80h1v4h-1zM95 80h1v4h-1zM96 80h1v4h-1zM97 81h1v3h-1zM98 80h1v4h-1zM99 80h1v4h-1zM100 80h1v4h-1zM101 81h1v3h-1zM102 80h1v4h-1zM103 80h1v4h-1zM104 81h1v3h-1zM105 81h1v5h-1zM106 80h1v4h-1zM107 81h1v3h-1zM108 81h1v3h-1zM109 81h1v3h-1zM110 81h1v3h-1zM111 81h1v3h-1zM112 81h1v3h-1zM113 80h1v4h-1zM114 80h1v4h-1zM115 80h1v4h-1zM116 81h1v3h-1zM117 80h1v4h-1zM118 80h1v4h-1zM119 81h1v3h-1zM120 81h1v3h-1zM121 80h1v4h-1zM122 80h1v4h-1zM123 80h1v4h-1zM124 81h1v3h-1zM125 80h1v4h-1zM126 80h1v4h-1zM127 81h1v3h-1zM128 81h1v3h-1zM129 81h1v3h-1zM130 81h1v3h-1zM131 81h1v3h-1zM132 81h1v3h-1zM133 81h1v3h-1zM134 81h1v3h-1zM135 81h1v3h-1zM136 80h1v4h-1zM137 81h1v5h-1zM138 80h1v4h-1zM139 81h1v3h-1zM140 80h1v4h-1zM141 81h1v3h-1zM142 81h1v3h-1zM143 80h1v4h-1zM144 81h1v3h-1zM145 81h1v3h-1zM146 81h1v3h-1zM147 80h1v4h-1zM148 81h1v3h-1zM149 81h1v3h-1zM150 81h1v3h-1zM151 81h1v3h-1zM152 81h1v4h-1zM153 81h1v4h-1zM154 80h1v4h-1zM155 81h1v3h-1zM156 81h1v3h-1zM157 81h1v3h-1zM158 81h1v3h-1zM159 81h1v3h-1zM160 81h1v3h-1zM161 80h1v4h-1zM162 81h1v3h-1zM163 81h1v3h-1zM164 81h1v3h-1zM165 81h1v3h-1zM166 81h1v3h-1zM167 81h1v3h-1zM168 81h1v3h-1zM169 81h1v3h-1zM170 81h1v3h-1zM171 81h1v3h-1zM172 81h1v3h-1zM173 81h1v3h-1zM174 80h1v4h-1zM175 80h1v5h-1zM176 81h1v3h-1zM177 80h1v4h-1zM178 81h1v3h-1zM179 80h1v4h-1zM180 81h1v4h-1zM181 81h1v3h-1zM182 80h1v4h-1zM183 81h1v3h-1zM184 81h1v3h-1zM185 81h1v3h-1zM186 80h1v4h-1zM187 81h1v3h-1zM188 81h1v3h-1zM189 81h1v3h-1zM190 80h1v4h-1zM191 81h1v3h-1zM192 81h1v3h-1zM193 81h1v3h-1zM194 81h1v3h-1zM195 81h1v3h-1zM196 80h1v4h-1zM197 80h1v4h-1zM198 80h1v4h-1zM199 81h1v3h-1zM200 81h1v3h-1zM201 81h1v3h-1zM202 81h1v3h-1zM203 81h1v3h-1zM204 80h1v4h-1zM205 81h1v3h-1zM206 80h1v4h-1zM207 81h1v3h-1zM208 81h1v3h-1zM209 81h1v3h-1zM210 81h1v3h-1zM211 80h1v4h-1zM212 80h1v4h-1zM213 81h1v3h-1zM214 81h1v3h-1zM215 81h1v3h-1zM216 81h1v3h-1zM217 81h1v3h-1zM218 81h1v4h-1zM219 81h1v3h-1zM220 81h1v3h-1zM221 81h1v3h-1zM222 81h1v3h-1zM223 81h1v3h-1zM224 81h1v3h-1zM225 80h1v4h-1zM226 81h1v3h-1zM227 81h1v3h-1zM228 81h1v3h-1zM229 80h1v4h-1zM230 81h1v3h-1zM231 80h1v4h-1zM232 81h1v3h-1zM233 81h1v3h-1zM234 80h1v4h-1zM235 81h1v3h-1zM236 81h1v3h-1zM237 81h1v3h-1zM238 80h1v4h-1zM239 80h1v4h-1zM240 80h1v4h-1zM241 81h1v4h-1zM242 80h1v4h-1zM243 80h1v4h-1zM244 81h1v3h-1zM245 81h1v3h-1zM246 80h1v4h-1zM247 81h1v3h-1zM248 81h1v3h-1zM249 81h1v3h-1zM250 81h1v3h-1zM251 81h1v3h-1zM252 81h1v3h-1zM253 81h1v3h-1zM254 81h1v3h-1zM255 80h1v4h-1zM256 80h1v4h-1zM257 81h1v3h-1zM258 81h1v3h-1zM259 81h1v3h-1zM260 81h1v3h-1zM261 80h1v4h-1zM262 81h1v3h-1zM263 80h1v4h-1zM264 80h1v4h-1zM265 81h1v3h-1zM266 81h1v3h-1zM267 81h1v3h-1zM268 80h1v4h-1zM269 81h1v3h-1zM270 80h1v4h-1zM271 81h1v4h-1zM272 81h1v3h-1zM273 81h1v3h-1zM274 80h1v4h-1zM275 81h1v3h-1zM276 81h1v3h-1zM277 80h1v4h-1zM278 80h1v4h-1zM279 80h1v4h-1zM280 81h1v3h-1zM281 81h1v3h-1zM282 81h1v3h-1zM283 80h1v4h-1zM284 80h1v4h-1zM285 81h1v3h-1zM286 81h1v3h-1zM287 80h1v4h-1zM288 80h1v4h-1zM289 80h1v6h-1zM290 81h1v3h-1zM291 81h1v3h-1zM292 80h1v4h-1zM293 80h1v4h-1zM294 81h1v3h-1zM295 80h1v4h-1zM296 80h1v4h-1zM297 80h1v4h-1zM298 81h1v3h-1zM299 80h1v4h-1zM300 81h1v3h-1zM301 81h1v3h-1zM302 80h1v4h-1zM303 81h1v3h-1zM304 80h1v4h-1zM305 81h1v3h-1zM306 81h1v3h-1zM307 81h1v3h-1zM308 81h1v3h-1zM309 80h1v4h-1zM310 81h1v3h-1zM311 81h1v3h-1zM312 81h1v3h-1zM313 80h1v4h-1zM314 80h1v4h-1zM315 81h1v3h-1zM316 81h1v3h-1zM317 81h1v3h-1zM318 81h1v3h-1zM319 80h1v4h-1zM320 81h1v3h-1zM321 80h1v4h-1zM322 81h1v3h-1zM323 81h1v3h-1zM324 81h1v3h-1zM325 81h1v3h-1zM326 81h1v3h-1zM327 81h1v3h-1zM328 81h1v3h-1zM329 81h1v3h-1zM330 80h1v4h-1zM331 80h1v4h-1zM332 81h1v3h-1zM333 80h1v4h-1zM334 80h1v4h-1zM335 81h1v3h-1zM336 81h1v3h-1zM337 80h1v4h-1zM338 81h1v4h-1zM339 80h1v4h-1zM340 80h1v4h-1zM341 81h1v3h-1zM342 81h1v3h-1zM343 81h1v3h-1zM344 80h1v5h-1zM345 80h1v4h-1zM346 80h1v4h-1zM347 81h1v3h-1zM348 81h1v3h-1zM349 80h1v4h-1zM350 80h1v4h-1zM351 80h1v4h-1zM352 81h1v3h-1zM353 81h1v3h-1zM354 81h1v3h-1zM355 81h1v4h-1zM356 81h1v3h-1zM357 80h1v4h-1zM358 80h1v4h-1zM359 80h1v4h-1zM360 80h1v4h-1zM361 80h1v4h-1zM362 81h1v3h-1zM363 80h1v4h-1zM364 81h1v3h-1zM365 80h1v4h-1zM366 81h1v3h-1zM367 80h1v4h-1zM368 81h1v3h-1zM369 80h1v5h-1zM370 80h1v4h-1zM371 81h1v3h-1zM372 81h1v3h-1zM373 81h1v3h-1zM374 80h1v4h-1zM375 81h1v3h-1zM376 81h1v3h-1zM377 80h1v4h-1zM378 81h1v3h-1zM379 81h1v3h-1zM380 81h1v3h-1zM381 80h1v4h-1zM382 80h1v4h-1zM383 80h1v4h-1zM384 81h1v3h-1zM385 80h1v4h-1zM386 80h1v4h-1zM387 81h1v3h-1zM388 81h1v3h-1zM389 80h1v4h-1zM390 81h1v3h-1zM391 80h1v4h-1zM392 81h1v3h-1zM393 81h1v3h-1zM394 81h1v3h-1zM395 81h1v3h-1zM396 80h1v4h-1zM397 80h1v4h-1zM398 81h1v3h-1zM399 80h1v4h-1zM400 81h1v4h-1zM401 81h1v3h-1zM402 80h1v4h-1zM403 81h1v3h-1zM404 81h1v3h-1zM405 81h1v3h-1zM406 81h1v3h-1zM407 81h1v3h-1zM408 81h1v3h-1zM409 81h1v3h-1zM410 81h1v3h-1zM411 81h1v3h-1zM412 81h1v4h-1zM413 81h1v3h-1zM414 81h1v3h-1zM415 81h1v3h-1zM416 80h1v4h-1zM417 80h1v4h-1zM418 81h1v3h-1zM419 80h1v4h-1zM420 81h1v3h-1zM421 80h1v4h-1zM422 80h1v4h-1zM423 81h1v3h-1zM424 80h1v5h-1zM425 80h1v4h-1zM426 80h1v4h-1zM427 81h1v3h-1zM428 80h1v4h-1zM429 81h1v3h-1zM430 80h1v4h-1zM431 81h1v3h-1zM432 80h1v4h-1zM433 80h1v4h-1zM434 81h1v3h-1zM435 81h1v3h-1zM436 80h1v4h-1zM437 80h1v4h-1zM438 80h1v4h-1zM439 80h1v4h-1zM440 80h1v4h-1zM441 80h1v4h-1zM442 80h1v4h-1zM443 81h1v3h-1zM444 81h1v3h-1zM445 81h1v3h-1zM446 81h1v3h-1zM447 80h1v4h-1zM448 80h1v4h-1zM449 81h1v3h-1zM450 80h1v4h-1zM451 80h1v4h-1zM452 81h1v3h-1zM453 81h1v4h-1zM454 80h1v4h-1zM455 81h1v3h-1zM456 81h1v3h-1zM457 81h1v3h-1zM458 80h1v4h-1zM459 80h1v4h-1zM460 80h1v4h-1zM461 80h1v4h-1zM462 81h1v3h-1zM463 80h1v4h-1zM464 81h1v3h-1zM465 81h1v3h-1zM466 80h1v4h-1zM467 81h1v3h-1zM468 80h1v4h-1zM469 81h1v3h-1zM470 81h1v3h-1zM471 81h1v3h-1zM472 81h1v3h-1zM473 81h1v3h-1zM474 81h1v3h-1zM475 81h1v3h-1zM476 80h1v4h-1zM477 81h1v3h-1zM478 81h1v3h-1zM479 80h1v5h-1zM480 81h1v3h-1zM481 81h1v3h-1zM482 81h1v3h-1zM483 81h1v3h-1zM484 80h1v4h-1zM485 81h1v3h-1zM486 81h1v5h-1zM487 80h1v4h-1zM488 81h1v3h-1zM489 81h1v3h-1zM490 81h1v3h-1zM491 81h1v3h-1zM492 81h1v3h-1zM493 80h1v4h-1zM494 81h1v3h-1zM495 81h1v3h-1zM496 81h1v3h-1zM497 81h1v3h-1zM498 81h1v4h-1zM499 80h1v4h-1zM500 81h1v3h-1zM501 81h1v3h-1zM502 81h1v3h-1zM503 80h1v4h-1zM504 81h1v3h-1zM505 81h1v4h-1zM506 81h1v3h-1zM507 81h1v3h-1zM508 80h1v4h-1zM509 81h1v3h-1zM510 80h1v4h-1zM511 81h1v5h-1zM512 81h1v3h-1zM513 81h1v3h-1zM514 81h1v3h-1zM515 81h1v3h-1zM516 80h1v4h-1zM517 81h1v3h-1zM518 80h1v4h-1zM519 80h1v4h-1zM520 81h1v3h-1zM521 81h1v3h-1zM522 80h1v4h-1zM523 81h1v3h-1zM524 80h1v4h-1zM525 81h1v3h-1zM526 80h1v4h-1zM527 81h1v3h-1zM528 81h1v3h-1zM530 53h1v3h-1zM531 53h1v3h-1zM532 53h1v3h-1zM534 80h1v4h-1zM535 81h1v3h-1zM536 81h1v3h-1zM537 81h1v3h-1zM538 81h1v3h-1zM539 80h1v4h-1zM540 81h1v3h-1zM541 80h1v4h-1zM542 81h1v3h-1zM543 81h1v3h-1zM544 81h1v3h-1zM545 81h1v3h-1zM546 81h1v3h-1zM547 81h1v3h-1zM548 80h1v4h-1zM549 81h1v3h-1zM550 80h1v4h-1zM551 80h1v4h-1zM552 53h1v2h-1zM553 53h1v3h-1zM555 81h1v3h-1zM556 80h1v4h-1zM557 81h1v3h-1zM558 80h1v4h-1zM559 81h1v3h-1zM560 81h1v3h-1zM561 80h1v4h-1zM562 81h1v3h-1zM563 81h1v3h-1zM564 81h1v3h-1zM565 80h1v4h-1zM566 81h1v3h-1zM568 53h1v3h-1zM569 52h1v4h-1zM570 52h1v4h-1zM572 80h1v4h-1zM573 81h1v3h-1zM574 81h1v4h-1zM575 81h1v3h-1zM576 81h1v3h-1zM577 81h1v3h-1zM578 81h1v3h-1zM579 81h1v3h-1zM580 81h1v3h-1zM581 81h1v4h-1zM582 80h1v4h-1zM583 81h1v3h-1zM584 81h1v3h-1zM585 81h1v3h-1zM586 80h1v4h-1zM587 80h1v4h-1zM588 80h1v4h-1zM589 53h1v2h-1zM590 53h1v3h-1zM592 80h1v4h-1zM593 81h1v3h-1zM594 81h1v3h-1zM595 80h1v4h-1zM596 80h1v4h-1zM597 80h1v4h-1zM598 80h1v4h-1zM599 81h1v3h-1zM600 81h1v3h-1zM601 80h1v4h-1zM603 53h1v3h-1zM605 81h1v3h-1zM606 81h1v3h-1zM607 81h1v3h-1zM608 81h1v3h-1zM609 80h1v4h-1zM610 81h1v3h-1zM611 81h1v3h-1zM612 81h1v4h-1zM613 81h1v3h-1zM614 81h1v4h-1zM615 81h1v3h-1zM616 81h1v3h-1zM618 52h1v4h-1zM619 53h1v3h-1zM620 53h1v3h-1zM622 81h1v3h-1zM623 80h1v5h-1zM624 81h1v3h-1zM625 81h1v3h-1zM626 81h1v4h-1zM627 81h1v3h-1zM628 81h1v3h-1zM629 81h1v3h-1zM630 80h1v4h-1zM631 81h1v3h-1zM632 80h1v4h-1zM633 80h1v4h-1zM634 81h1v3h-1zM635 81h1v3h-1zM636 81h1v3h-1zM637 81h1v3h-1zM638 81h1v3h-1zM639 81h1v3h-1zM640 81h1v3h-1zM641 81h1v3h-1zM642 53h1v2h-1zM643 53h1v3h-1zM644 52h1v4h-1zM645 52h1v4h-1zM646 53h1v2h-1zM647 81h1v3h-1zM648 81h1v3h-1zM649 80h1v5h-1zM650 80h1v4h-1zM651 81h1v3h-1zM652 81h1v3h-1zM653 81h1v3h-1zM654 81h1v3h-1zM655 81h1v3h-1zM656 81h1v3h-1zM657 81h1v3h-1zM658 80h1v4h-1zM659 81h1v3h-1zM660 81h1v3h-1zM661 81h1v3h-1zM662 80h1v4h-1zM663 80h1v5h-1zM664 80h1v4h-1zM666 52h1v4h-1zM668 80h1v4h-1zM669 81h1v3h-1zM670 81h1v3h-1zM671 80h1v4h-1zM672 81h1v3h-1zM673 81h1v3h-1zM674 80h1v4h-1zM675 81h1v3h-1zM676 81h1v3h-1zM677 81h1v3h-1zM678 80h1v4h-1zM680 53h1v3h-1zM681 53h1v3h-1zM682 53h1v3h-1zM684 81h1v4h-1zM685 81h1v3h-1zM686 81h1v3h-1zM687 80h1v4h-1zM688 81h1v3h-1zM689 81h1v3h-1zM690 81h1v3h-1zM691 81h1v3h-1zM692 80h1v4h-1zM693 80h1v4h-1zM694 80h1v4h-1zM695 81h1v3h-1zM696 81h1v3h-1zM697 81h1v3h-1zM698 81h1v3h-1zM699 81h1v4h-1zM700 80h1v4h-1zM701 81h1v3h-1zM702 53h1v2h-1zM703 52h1v4h-1zM704 53h1v2h-1zM705 81h1v3h-1zM706 81h1v3h-1zM707 81h1v3h-1zM708 81h1v3h-1zM709 81h1v3h-1zM710 80h1v4h-1zM711 81h1v3h-1zM712 81h1v3h-1zM713 81h1v3h-1zM715 53h1v3h-1zM717 81h1v3h-1zM718 81h1v3h-1zM719 81h1v3h-1zM720 81h1v3h-1zM721 80h1v4h-1zM722 81h1v3h-1zM723 81h1v3h-1zM724 80h1v4h-1zM725 81h1v3h-1zM726 80h1v4h-1zM727 81h1v3h-1zM728 81h1v3h-1zM730 52h1v4h-1zM731 53h1v3h-1zM732 53h1v3h-1zM733 53h1v2h-1zM734 81h1v3h-1zM735 80h1v4h-1zM736 81h1v3h-1zM737 81h1v3h-1zM738 80h1v4h-1zM739 80h1v4h-1zM740 81h1v3h-1zM741 81h1v3h-1zM742 81h1v3h-1zM743 81h1v3h-1zM744 80h1v4h-1zM745 81h1v5h-1zM746 81h1v3h-1zM747 81h1v3h-1zM748 81h1v3h-1zM749 81h1v3h-1zM750 81h1v3h-1zM751 81h1v3h-1zM752 81h1v3h-1zM753 81h1v3h-1zM755 52h1v4h-1zM756 53h1v3h-1zM757 52h1v4h-1zM759 81h1v3h-1zM760 80h1v6h-1zM761 81h1v3h-1zM762 80h1v4h-1zM763 81h1v3h-1zM764 81h1v4h-1zM765 80h1v4h-1zM766 81h1v3h-1zM767 80h1v4h-1zM768 81h1v3h-1zM769 80h1v4h-1zM770 81h1v3h-1zM771 81h1v3h-1zM772 81h1v3h-1zM773 81h1v4h-1zM774 80h1v4h-1zM775 80h1v4h-1zM776 80h1v4h-1zM778 53h1v3h-1zM780 80h1v4h-1zM781 80h1v4h-1zM782 81h1v3h-1zM783 81h1v3h-1zM784 80h1v4h-1zM785 81h1v3h-1zM786 81h1v3h-1zM787 81h1v3h-1zM788 81h1v3h-1zM789 81h1v3h-1zM790 81h1v3h-1zM791 80h1v4h-1zM792 53h1v2h-1zM793 53h1v3h-1zM794 53h1v3h-1zM795 52h1v4h-1zM797 81h1v3h-1zM798 81h1v3h-1zM799 81h1v3h-1zM800 80h1v4h-1zM801 80h1v4h-1zM802 81h1v3h-1zM803 81h1v3h-1zM804 81h1v3h-1zM805 80h1v4h-1zM806 81h1v3h-1zM807 81h1v4h-1zM808 81h1v3h-1zM809 81h1v3h-1zM810 81h1v3h-1zM811 80h1v4h-1zM812 81h1v3h-1zM813 81h1v3h-1zM814 53h1v2h-1zM815 52h1v4h-1zM817 81h1v3h-1zM818 80h1v4h-1zM819 81h1v3h-1zM820 80h1v4h-1zM821 80h1v4h-1zM822 81h1v3h-1zM823 81h1v3h-1zM824 80h1v4h-1zM825 81h1v3h-1zM826 81h1v3h-1zM827 80h1v4h-1zM828 81h1v3h-1zM830 53h1v3h-1zM831 53h1v3h-1zM832 52h1v4h-1zM834 81h1v3h-1zM835 81h1v3h-1zM836 81h1v4h-1zM837 81h1v3h-1zM838 81h1v3h-1zM839 81h1v3h-1zM840 81h1v5h-1zM841 80h1v4h-1zM842 81h1v3h-1zM843 81h1v5h-1zM844 81h1v5h-1zM845 81h1v3h-1zM846 81h1v3h-1zM847 80h1v4h-1zM848 81h1v3h-1zM849 80h1v4h-1zM850 81h1v3h-1zM851 81h1v3h-1zM853 52h1v4h-1zM855 81h1v3h-1zM856 80h1v4h-1zM857 81h1v3h-1zM858 80h1v4h-1zM859 80h1v4h-1zM860 81h1v3h-1zM861 81h1v4h-1zM862 81h1v3h-1zM863 81h1v3h-1zM864 81h1v3h-1zM865 81h1v3h-1zM866 81h1v3h-1zM867 53h1v2h-1zM868 53h1v3h-1zM869 53h1v3h-1zM870 52h1v4h-1zM872 80h1v4h-1zM873 81h1v3h-1zM874 81h1v3h-1zM875 81h1v3h-1zM876 80h1v4h-1zM877 80h1v4h-1zM878 81h1v3h-1zM879 81h1v3h-1zM880 80h1v4h-1zM881 81h1v3h-1zM882 81h1v3h-1zM883 81h1v3h-1zM884 81h1v3h-1zM885 81h1v3h-1zM886 81h1v3h-1zM887 81h1v3h-1zM888 80h1v4h-1zM889 53h1v2h-1zM890 53h1v3h-1zM892 81h1v3h-1zM893 81h1v3h-1zM894 81h1v3h-1zM895 80h1v4h-1zM896 81h1v3h-1zM897 80h1v4h-1zM898 81h1v3h-1zM899 81h1v4h-1zM900 81h1v3h-1zM901 80h1v5h-1zM902 53h1v2h-1zM903 52h1v4h-1zM905 80h1v4h-1zM906 80h1v4h-1zM907 80h1v4h-1zM908 80h1v4h-1zM909 80h1v4h-1zM910 81h1v3h-1zM911 80h1v4h-1zM912 81h1v3h-1zM913 80h1v4h-1zM914 80h1v4h-1zM915 81h1v3h-1zM916 80h1v4h-1zM918 52h1v4h-1zM919 53h1v3h-1zM920 53h1v3h-1zM921 53h1v2h-1zM922 81h1v3h-1zM923 80h1v4h-1zM924 81h1v3h-1zM925 80h1v4h-1zM926 80h1v4h-1zM927 81h1v3h-1zM928 80h1v5h-1zM929 81h1v3h-1zM930 80h1v4h-1zM931 80h1v4h-1zM932 81h1v3h-1zM933 81h1v4h-1zM934 80h1v4h-1zM935 81h1v3h-1zM936 81h1v3h-1zM937 81h1v3h-1zM938 81h1v3h-1zM939 80h1v4h-1zM940 53h1v2h-1zM941 53h1v3h-1zM942 53h1v2h-1zM943 81h1v3h-1zM944 80h1v4h-1zM945 81h1v3h-1zM946 80h1v4h-1zM947 81h1v3h-1zM948 81h1v3h-1zM949 80h1v5h-1zM950 81h1v3h-1zM951 81h1v3h-1zM952 81h1v3h-1zM953 81h1v3h-1zM955 53h1v3h-1zM956 53h1v3h-1zM957 52h1v4h-1zM959 81h1v3h-1zM960 81h1v3h-1zM961 80h1v4h-1zM962 81h1v3h-1zM963 81h1v3h-1zM964 81h1v3h-1zM965 80h1v4h-1zM966 81h1v3h-1zM967 81h1v3h-1zM968 80h1v4h-1zM969 80h1v4h-1zM970 81h1v3h-1zM971 81h1v3h-1zM972 81h1v3h-1zM973 80h1v4h-1zM974 81h1v3h-1zM975 81h1v3h-1zM976 81h1v3h-1zM977 53h1v2h-1zM978 53h1v3h-1zM979 53h1v2h-1zM980 81h1v3h-1zM981 80h1v4h-1zM982 81h1v3h-1zM983 80h1v4h-1zM984 81h1v3h-1zM985 81h1v3h-1zM986 80h1v4h-1zM987 81h1v3h-1zM988 80h1v4h-1zM989 81h1v3h-1zM990 81h1v4h-1zM991 80h1v4h-1zM992 53h1v2h-1zM993 53h1v3h-1zM994 53h1v3h-1zM995 53h1v3h-1zM997 80h1v5h-1zM998 81h1v3h-1zM999 81h1v3h-1zM1000 80h1v4h-1zM1001 81h1v3h-1zM1002 81h1v3h-1zM1003 81h1v3h-1zM1004 81h1v3h-1zM1005 80h1v4h-1zM1006 81h1v3h-1zM1007 81h1v3h-1zM1008 80h1v4h-1zM1009 81h1v3h-1zM1010 81h1v3h-1zM1011 80h1v4h-1zM1012 81h1v3h-1zM1013 80h1v4h-1zM1014 81h1v3h-1zM1015 81h1v3h-1zM1016 53h1v2h-1zM1017 53h1v3h-1zM1018 52h1v4h-1zM1019 53h1v3h-1zM1020 53h1v2h-1z" fill="#e9e800"/><path d="M22 83h1v1h-1zM25 81h1v1h-1zM26 81h1v1h-1zM29 82h1v1h-1zM36 83h1v1h-1zM38 81h1v1h-1zM47 83h1v1h-1zM56 83h1v1h-1zM58 83h1v1h-1zM61 81h1v1h-1zM65 83h1v1h-1zM68 81h1v1h-1zM76 83h1v1h-1zM87 83h1v1h-1zM91 82h1v1h-1zM93 81h1v1h-1zM94 81h1v1h-1zM107 81h1v1h-1zM109 83h1v1h-1zM110 83h1v1h-1zM113 82h1v1h-1zM131 83h1v1h-1zM138 81h1v1h-1zM145 82h1v1h-1zM151 81h1v1h-1zM157 83h1v1h-1zM158 83h1v1h-1zM161 83h1v1h-1zM177 82h1v1h-1zM185 83h1v1h-1zM187 82h1v1h-1zM191 83h1v1h-1zM204 81h1v1h-1zM205 83h1v1h-1zM207 81h1v1h-1zM210 81h1v1h-1zM211 83h1v1h-1zM215 81h1v1h-1zM218 83h1v1h-1zM219 82h1v1h-1zM220 81h1v1h-1zM222 83h1v1h-1zM227 82h1v1h-1zM228 81h1v1h-1zM230 81h1v1h-1zM241 81h1v1h-1zM242 83h1v1h-1zM243 81h1v1h-1zM244 81h1v1h-1zM250 81h1v1h-1zM251 83h1v1h-1zM252 83h1v1h-1zM254 82h1v1h-1zM255 81h1v1h-1zM259 83h1v1h-1zM260 81h1v1h-1zM267 81h1v1h-1zM269 83h1v1h-1zM270 83h1v1h-1zM271 83h1v1h-1zM276 81h1v1h-1zM277 83h1v1h-1zM281 83h1v1h-1zM284 82h1v1h-1zM285 81h1v1h-1zM286 81h1v1h-1zM298 81h1v1h-1zM304 81h1v1h-1zM310 83h1v1h-1zM319 82h1v1h-1zM329 83h1v1h-1zM330 83h1v1h-1zM331 81h1v1h-1zM332 81h1v1h-1zM336 83h1v1h-1zM344 83h1v1h-1zM346 82h1v1h-1zM347 83h1v1h-1zM352 81h1v1h-1zM360 83h1v1h-1zM366 82h1v1h-1zM367 83h1v1h-1zM369 81h1v1h-1zM371 81h1v1h-1zM378 83h1v1h-1zM382 82h1v1h-1zM392 82h1v1h-1zM393 82h1v1h-1zM395 83h1v1h-1zM399 82h1v1h-1zM400 83h1v1h-1zM401 83h1v1h-1zM409 81h1v1h-1zM416 81h1v1h-1zM418 83h1v1h-1zM419 83h1v1h-1zM420 83h1v1h-1zM430 83h1v1h-1zM431 82h1v1h-1zM432 82h1v1h-1zM444 82h1v1h-1zM445 81h1v1h-1zM456 82h1v1h-1zM458 82h1v1h-1zM460 83h1v1h-1zM464 81h1v1h-1zM465 82h1v1h-1zM478 81h1v1h-1zM480 81h1v1h-1zM488 83h1v1h-1zM490 83h1v1h-1zM510 81h1v1h-1zM543 81h1v1h-1zM547 81h1v1h-1zM558 82h1v1h-1zM562 83h1v1h-1zM563 83h1v1h-1zM566 83h1v1h-1zM574 82h1v1h-1zM576 81h1v1h-1zM578 83h1v1h-1zM598 83h1v1h-1zM599 81h1v1h-1zM601 82h1v1h-1zM607 83h1v1h-1zM610 82h1v1h-1zM614 83h1v1h-1zM626 81h1v1h-1zM628 82h1v1h-1zM632 81h1v1h-1zM633 83h1v1h-1zM635 82h1v1h-1zM636 82h1v1h-1zM637 81h1v1h-1zM639 81h1v1h-1zM647 81h1v1h-1zM650 81h1v1h-1zM653 82h1v1h-1zM657 83h1v1h-1zM658 81h1v1h-1zM659 82h1v1h-1zM669 81h1v1h-1zM671 83h1v1h-1zM675 81h1v1h-1zM698 83h1v1h-1zM699 83h1v1h-1zM700 81h1v1h-1zM706 83h1v1h-1zM707 82h1v1h-1zM711 83h1v1h-1zM712 83h1v1h-1zM719 81h1v1h-1zM727 81h1v1h-1zM739 82h1v1h-1zM742 83h1v1h-1zM747 83h1v1h-1zM750 83h1v1h-1zM760 83h1v1h-1zM761 82h1v1h-1zM767 81h1v1h-1zM780 83h1v1h-1zM781 81h1v1h-1zM782 82h1v1h-1zM797 83h1v1h-1zM798 81h1v1h-1zM801 83h1v1h-1zM803 81h1v1h-1zM804 83h1v1h-1zM805 83h1v1h-1zM821 83h1v1h-1zM824 83h1v1h-1zM827 81h1v1h-1zM828 81h1v1h-1zM838 82h1v1h-1zM841 81h1v1h-1zM842 83h1v1h-1zM848 81h1v1h-1zM850 82h1v1h-1zM855 82h1v1h-1zM875 83h1v1h-1zM882 82h1v1h-1zM884 81h1v1h-1zM888 81h1v1h-1zM892 81h1v1h-1zM899 81h1v1h-1zM907 83h1v1h-1zM910 81h1v1h-1zM911 81h1v1h-1zM913 82h1v1h-1zM915 81h1v1h-1zM916 83h1v1h-1zM922 81h1v1h-1zM926 81h1v1h-1zM927 81h1v1h-1zM935 81h1v1h-1zM944 82h1v1h-1zM946 83h1v1h-1zM947 81h1v1h-1zM951 81h1v1h-1zM953 83h1v1h-1zM962 81h1v1h-1zM975 83h1v1h-1zM976 83h1v1h-1zM999 81h1v1h-1zM1000 83h1v1h-1zM1005 81h1v1h-1zM1008 81h1v1h-1zM1009 83h1v1h-1zM1010 82h1v1h-1zM1013 82h1v1h-1z" fill="#b4b000"/></g>
<g fill="none" stroke="#a09a9e" stroke-width="2" shape-rendering="crispEdges"><path d="M514 20h-8v127h8"/><path d="M749 20h8v127h-8"/></g>
<g><path d="M515.5 17h11l-5.5 6z" fill="#ff9900"/><path d="M515 25.5q0-1.5 1.5-1.5h9q1.5 0 1.5 1.5v10.5l-6 3.2l-6-3.2z" fill="#ff9900"/><text x="521" y="35.4" text-anchor="middle" font-family="'DejaVu Sans','Liberation Sans',sans-serif" font-weight="bold" font-size="14.5" fill="#000">T</text></g>
<g><path d="M74.5 167h11l-5.5 6z" fill="#ff9900"/><path d="M74 175.5q0-1.5 1.5-1.5h9q1.5 0 1.5 1.5v10.5l-6 3.2l-6-3.2z" fill="#ff9900"/><text x="80" y="185.4" text-anchor="middle" font-family="'DejaVu Sans','Liberation Sans',sans-serif" font-weight="bold" font-size="14.5" fill="#000">T</text></g>
<g><path d="M0 90h13l6.5 8l-6.5 8h-13z" fill="#ffff00"/><path d="M0 106h13l6.5-8" fill="none" stroke="#23235a" stroke-width="1" opacity=".7"/><path d="M0 90.5h12.5" fill="none" stroke="#ffffd0" stroke-width="1"/><text x="7.3" y="103.7" text-anchor="middle" font-family="'NanumGothic','Liberation Sans',sans-serif" font-weight="bold" font-size="14.5" stroke="#000" stroke-width=".4" fill="#000">1</text></g>
<g><path d="M0 472.5h13l6.5 8l-6.5 8h-13z" fill="#ffff00"/><path d="M0 488.5h13l6.5-8" fill="none" stroke="#23235a" stroke-width="1" opacity=".7"/><path d="M0 473.0h12.5" fill="none" stroke="#ffffd0" stroke-width="1"/><text x="7.3" y="486.2" text-anchor="middle" font-family="'NanumGothic','Liberation Sans',sans-serif" font-weight="bold" font-size="14.5" stroke="#000" stroke-width=".4" fill="#000">1</text></g>
<path d="M1009.8 410.5l6.4-5.7v4.9h5v1.6h-5v4.9z" fill="#ffff00"/>
</svg>
<div class="abs tek"><span style="left:-2.4px">T</span><span style="left:8.2px;transform:scaleX(1.22)">e</span><span style="left:19px;transform:scaleX(1.13)">k</span></div>
<div class="cj sp" style="left:35px;top:0px;">预览</div>
<div class="abs t" style="left:590px;top:-1px;">M 4.00ms</div>
<div class="cj " style="left:21.5px;top:150px;">缩放系数</div>
<div class="abs t" style="left:93.5px;top:149px;letter-spacing:.6px">: 4 X</div>

<div class="box" style="left:21px;top:616px;width:554px;height:21px"></div>
<div class="box" style="left:21px;top:638px;width:554px;height:128px"></div>
<div class="pill" style="left:26px;top:619px">1</div>
<div class="abs t y" style="left:68px;top:618px;">1.00 V</div>
<div class="cj sp" style="left:158px;top:641.5px;">值</div><div class="cj sp" style="left:246px;top:641.5px;">平均值</div><div class="cj sp" style="left:328px;top:641.5px;">最小值</div><div class="cj sp" style="left:410px;top:641.5px;">最大值</div><div class="cj sp" style="left:492px;top:641.5px;">标准差</div><div class="pill" style="left:26px;top:659px">1</div><div class="cj y" style="left:55.5px;top:660px;">峰</div><div class="abs t y" style="left:73px;top:657px;width:11px;text-align:center;transform:scaleX(2.5)">-</div><div class="cj y" style="left:85px;top:660px;">峰</div><div class="abs t y" style="left:158px;top:658px;">2.40 V</div><div class="abs t y" style="left:246px;top:658px;">2.40</div><div class="abs t y" style="left:328px;top:658px;">2.40</div><div class="abs t y" style="left:410px;top:658px;">2.40</div><div class="abs t y" style="left:492px;top:658px;">0.00</div><div class="pill" style="left:26px;top:677px">1</div><div class="abs t y" style="left:56px;top:676px;letter-spacing:.95px">Amplitude</div><div class="abs t y" style="left:158px;top:676px;">2.16 V</div><div class="abs t y" style="left:246px;top:676px;">2.16</div><div class="abs t y" style="left:328px;top:676px;">2.16</div><div class="abs t y" style="left:410px;top:676px;">2.16</div><div class="abs t y" style="left:492px;top:676px;">0.00</div><div class="pill" style="left:26px;top:695px">1</div><div class="cj y sp" style="left:55.5px;top:696px;">最大</div><div class="abs t y" style="left:158px;top:694px;">3.42 V</div><div class="abs t y" style="left:246px;top:694px;">3.42</div><div class="abs t y" style="left:328px;top:694px;">3.42</div><div class="abs t y" style="left:410px;top:694px;">3.42</div><div class="abs t y" style="left:492px;top:694px;">0.00</div><div class="pill" style="left:26px;top:713px">1</div><div class="abs t y" style="left:56px;top:712px;letter-spacing:.95px">Frequency</div><div class="abs t y" style="left:158px;top:712px;">1.092kHz</div><div class="abs t y" style="left:246px;top:712px;">1.092k</div><div class="abs t y" style="left:328px;top:712px;">1.092k</div><div class="abs t y" style="left:410px;top:712px;">1.092k</div><div class="abs t y" style="left:492px;top:712px;">0.000</div><div class="pill" style="left:26px;top:731px">1</div><div class="cj y sp" style="left:55.5px;top:732px;">均方根</div><div class="abs t y" style="left:158px;top:730px;">1.72 V</div><div class="abs t y" style="left:246px;top:730px;">1.72</div><div class="abs t y" style="left:328px;top:730px;">1.72</div><div class="abs t y" style="left:410px;top:730px;">1.72</div><div class="abs t y" style="left:492px;top:730px;">0.00</div><div class="pill" style="left:26px;top:749px">1</div><div class="cj y sp" style="left:55.5px;top:750px;">平均</div><div class="abs t y" style="left:158px;top:748px;">1.53 V</div><div class="abs t y" style="left:246px;top:748px;">1.53</div><div class="abs t y" style="left:328px;top:748px;">1.53</div><div class="abs t y" style="left:410px;top:748px;">1.53</div><div class="abs t y" style="left:492px;top:748px;">0.00</div>

<div class="box" style="left:584px;top:670px;width:148px;height:38px"></div>
<div class="abs t" style="left:589px;top:672px;">Z 1.00ms</div>
<svg class="scr" style="left:588px;top:690px" width="40" height="16" viewBox="0 0 40 16"><rect x="1" y="1.5" width="11.5" height="12.5" rx="2" fill="#ff9900"/><text x="6.8" y="12.6" text-anchor="middle" font-family="'DejaVu Sans','Liberation Sans',sans-serif" font-weight="bold" font-size="12" fill="#000">T</text><path d="M14 7.7h8.5M19.5 4.5l3.2 3.2l-3.2 3.2" fill="none" stroke="#ff9900" stroke-width="1.4"/><path d="M24 4.5h11l-5.5 5.6z" fill="#ff9900"/></svg>
<div class="abs t o" style="left:624px;top:689px;">0.00000 s</div>
<div class="box" style="left:741px;top:670px;width:107px;height:38px"></div>
<div class="abs t" style="left:747px;top:672px;letter-spacing:1.5px">250k</div><div class="cj " style="left:787.5px;top:673px;">次</div><div class="abs t" style="left:803.5px;top:672px;-webkit-text-stroke:.7px #fff;transform:scaleX(1.3);transform-origin:0 0">/</div><div class="cj " style="left:814px;top:673px;">秒</div>
<div class="abs t" style="left:747px;top:689px;letter-spacing:1.2px">10k</div><div class="cj " style="left:782px;top:691px;">点</div>
<div class="box" style="left:857px;top:670px;width:165px;height:38px"></div>
<div class="pill" style="left:889px;top:673px">1</div>
<svg class="scr" style="left:926px;top:673px" width="16" height="15" viewBox="0 0 16 15"><path d="M2 12h4l3.4-9h4.8" fill="none" stroke="#fff" stroke-width="2"/></svg>
<div class="abs t" style="left:963px;top:672px;">1.40 V</div>
<div class="box" style="left:909px;top:729px;width:113px;height:37px"></div>
<div class="abs t" style="left:925px;top:732px;">8 1</div><div class="cj " style="left:951px;top:733px;">月</div><div class="abs t" style="left:979px;top:732px;">2013</div>
<div class="abs t" style="left:915px;top:748px;">13:00:25</div>
</body></html>
